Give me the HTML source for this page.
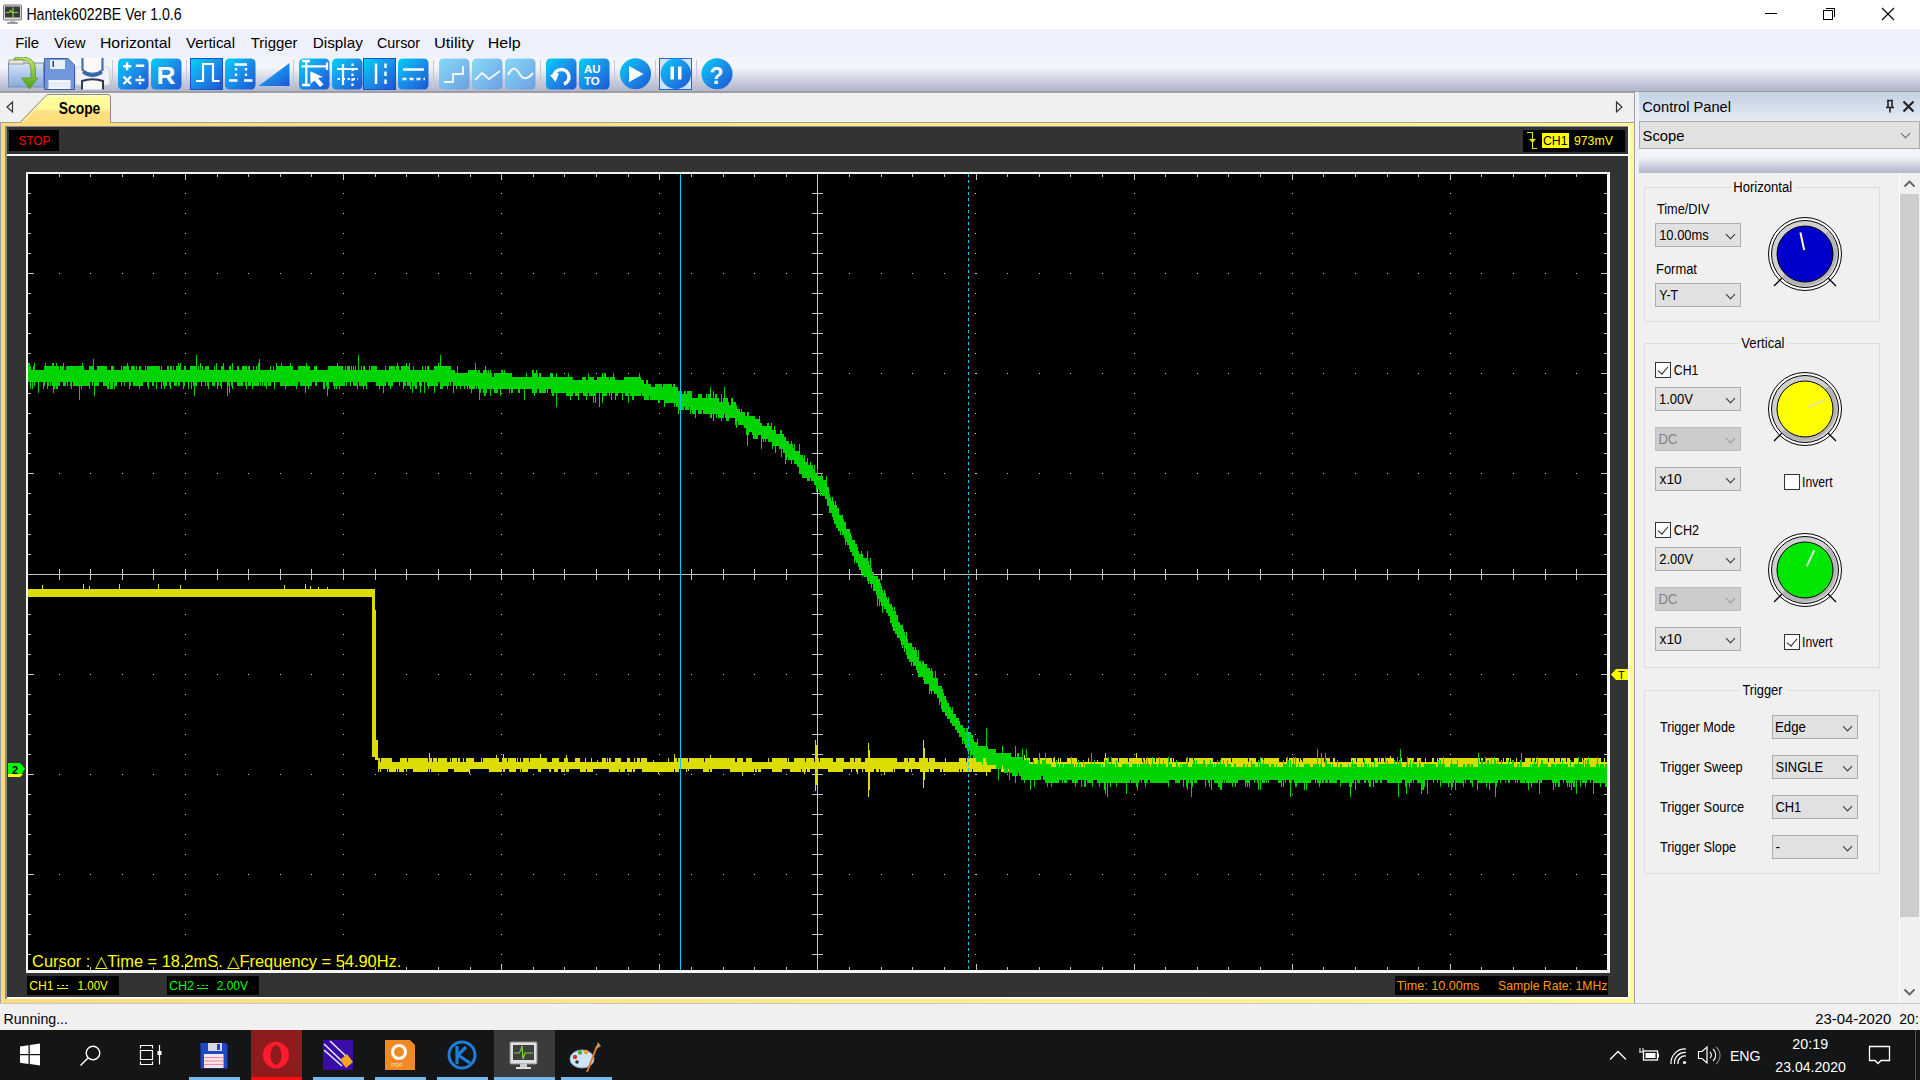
<!DOCTYPE html>
<html><head><meta charset="utf-8">
<style>
*{margin:0;padding:0;box-sizing:border-box}
html,body{width:1920px;height:1080px;overflow:hidden;background:#f0f0f0;font-family:"Liberation Sans",sans-serif;color:#000}
.a{position:absolute}
.t{position:absolute;white-space:nowrap;line-height:1}
#title{left:0;top:0;width:1920px;height:29px;background:#fff}
#menu{left:0;top:29px;width:1920px;height:28px;background:#eef0fb}
#tool{left:0;top:57px;width:1920px;height:35px;background:linear-gradient(#f3f5fb 0%,#f2f5fb 30%,#dcdfea 55%,#c6c9da 75%,#b4b8cc 97%);border-bottom:1px solid #9c9ca4}
#tabs{left:0;top:92px;width:1635px;height:31px;background:#f0f0f0;border-top:1px solid #a0a0a0}
#frame{left:0;top:122px;width:1635px;height:882px;background:linear-gradient(to right,#fedb7a 0%,#fee983 50%,#fff08a 75%,#fffa98 100%);border:1px solid #a0a0a8}
#dark{left:5px;top:126px;width:1625px;height:873px;background:#333;border-left:2px solid #8c8c94;border-top:1px solid #8c8c94}
.blk{position:absolute;background:#000}
.cp{left:1635px;top:92px;width:285px;height:911px;background:#f0f0f0}
.dd{position:absolute;background:#e1e1e1;border:1px solid #adadad;font-size:14px}
.dd span{position:absolute;left:3px;top:5px}
.dd i{position:absolute;right:6px;top:7px;width:7px;height:7px;border-right:1px solid #333;border-bottom:1px solid #333;transform:rotate(45deg)}
.dis{background:#cccccc;border-color:#bfbfbf;color:#838383}
.dis i{border-color:#9a9a9a}
.grp{position:absolute;border:1px solid #dcdcdc}
.grp b{position:absolute;background:#f0f0f0;top:-2px;height:3px}
.cb{position:absolute;width:16px;height:16px;border:1px solid #333;background:#fff}
.cb.on::after{content:"";position:absolute;left:4px;top:1px;width:5px;height:9px;border-right:1.5px solid #222;border-bottom:1.5px solid #222;transform:rotate(40deg)}
.lbl{position:absolute;font-size:14px;white-space:nowrap;line-height:1}
#status{left:0;top:1003px;width:1920px;height:27px;background:#f0f0f0;border-top:1px solid #c8c8c8}
#task{left:0;top:1030px;width:1920px;height:50px;background:#131517}
.ul{position:absolute;top:1077px;height:3px;background:#76b9ed}
</style></head><body>
<!-- title bar -->
<div id="title" class="a"></div>
<svg class="a" style="left:3px;top:4px" width="19" height="21" viewBox="0 0 19 21">
<rect x="0.5" y="1" width="18" height="15" rx="1" fill="#d8d8d8" stroke="#777" stroke-width="1"/>
<rect x="2" y="2.5" width="15" height="11" fill="#3a3a3a"/>
<path d="M3 8.5h3l1.5-2 1.5 2h1l0-5 0 10 0-5h5" stroke="#8fd43a" stroke-width="1.2" fill="none"/>
<rect x="7" y="16" width="5" height="2" fill="#bbb"/><rect x="4" y="18" width="11" height="2" rx="1" fill="#999"/>
</svg>
<div class="a" style="left:1765px;top:13px;width:12px;height:1px;background:#000"></div>
<div class="a" style="left:1823px;top:10px;width:10px;height:10px;border:1px solid #000"></div>
<div class="a" style="left:1826px;top:8px;width:9px;height:9px;border-top:1px solid #000;border-right:1px solid #000"></div>
<svg class="a" style="left:1881px;top:7px" width="14" height="14"><path d="M1 1L13 13M13 1L1 13" stroke="#000" stroke-width="1.1"/></svg>

<!-- menu -->
<div id="menu" class="a"></div>

<!-- toolbar -->
<div id="tool" class="a"></div>
<svg class="a" style="left:0;top:57px" width="740" height="35" viewBox="0 57 740 35">
<defs>
<linearGradient id="bg" x1="0" y1="0" x2="1" y2="1"><stop offset="0" stop-color="#00d2f5"/><stop offset="0.45" stop-color="#1a94ea"/><stop offset="1" stop-color="#1b55d5"/></linearGradient>
<linearGradient id="lb" x1="0" y1="0" x2="1" y2="1"><stop offset="0" stop-color="#86dcf8"/><stop offset="1" stop-color="#6c9ee2"/></linearGradient>
<linearGradient id="fold" x1="0" y1="0" x2="0" y2="1"><stop offset="0" stop-color="#d6e4f6"/><stop offset="1" stop-color="#86a8dc"/></linearGradient>
<linearGradient id="grn" x1="0" y1="0" x2="0" y2="1"><stop offset="0" stop-color="#c8e86a"/><stop offset="1" stop-color="#4aa018"/></linearGradient>
</defs>
<rect x="8.5" y="63" width="35" height="24" fill="url(#fold)" stroke="#7d8db0" stroke-width="1"/>
<rect x="9" y="60" width="15" height="4" fill="#e8e4d0" stroke="#8a8a80" stroke-width="0.8"/>
<path d="M14 59.5Q31 57 31 70V78H21.5L29.5 89L38 78H35.5V70Q35.5 54 14 58Z" fill="url(#grn)" stroke="#5a9a20" stroke-width="0.8"/>
<path d="M44.5 58.5H68L74.5 65V89.5H44.5Z" fill="#6f97da" stroke="#3d5da8" stroke-width="1"/>
<rect x="50" y="60" width="15" height="9" fill="#e8eef8"/><rect x="52.5" y="61" width="1.5" height="6" fill="#33415e"/>
<rect x="48.5" y="80" width="22" height="9" fill="#f0f4fc"/><path d="M49 83.5H70M49 86H70" stroke="#d4dcea" stroke-width="0.8"/>
<rect x="75.5" y="67" width="34" height="18" rx="2.5" fill="#f2f2f6" stroke="#d4d4dc"/>
<rect x="82" y="58" width="21" height="14" fill="#fafafa"/><path d="M82.5 58V70Q92.5 78 102.5 70V58" stroke="#4470b4" stroke-width="2.2" fill="none"/><path d="M83 72Q92.5 79 102 72" stroke="#3a64a8" stroke-width="3" fill="none"/>
<path d="M82 89.5V81Q92.5 77.5 103 81V89.5" stroke="#2a3a58" stroke-width="2" fill="#fbf8f8"/>
<rect x="112" y="60" width="1" height="29" fill="#c4c6d4"/>
<rect x="118" y="58.5" width="30.5" height="31" rx="4.5" fill="url(#bg)"/>
<path d="M123 66.3h8.3M127.1 62.3v8M135.8 65.8h8.5M123.5 76.5l7.5 7.5M131 76.5l-7.5 7.5M135.5 80h9" stroke="#fff" stroke-width="2.4"/><circle cx="140" cy="76.8" r="1.3" fill="#fff"/><circle cx="140" cy="83.2" r="1.3" fill="#fff"/>
<rect x="151" y="58.5" width="30.5" height="31" rx="4.5" fill="url(#bg)"/>
<text x="156.5" y="84" font-family="Liberation Sans" font-weight="bold" font-size="23.5" fill="#fff" textLength="19" lengthAdjust="spacingAndGlyphs">R</text>
<rect x="186" y="60" width="1" height="29" fill="#c4c6d4"/>
<rect x="190.5" y="58.5" width="32" height="31" fill="none" stroke="#1c50d0" stroke-width="1"/>
<rect x="191" y="59" width="31" height="30" fill="url(#bg)"/>
<path d="M196 81H203V64H213V81H219.5" stroke="#fff" stroke-width="2.2" fill="none"/>
<rect x="225" y="58.5" width="30.5" height="31" rx="4.5" fill="url(#bg)"/>
<path d="M229 80.5H237.5M244 80.5H252.5M234.5 64.5H247M236 68v2.5M236 73.5v2.5M246 68v2.5M246 73.5v2.5" stroke="#fff" stroke-width="2.3" fill="none"/>
<path d="M258.5 86L289.5 63V86Z" fill="url(#bg)"/>
<rect x="293" y="60" width="1" height="29" fill="#c4c6d4"/>
<rect x="299" y="58.5" width="30.5" height="31" rx="4.5" fill="url(#bg)"/>
<path d="M302 61H310M302 85H310M306.3 61V85M301.5 66.4H327M327 62.5V70" stroke="#fff" stroke-width="2.3"/><path d="M310.3 71.3L310.5 84L314.5 80.5L320 87L323.5 84.5L318 78L323 77Z" fill="#fff"/>
<rect x="332" y="58.5" width="30.5" height="31" rx="4.5" fill="url(#bg)"/>
<path d="M337 69H358M343 64V85" stroke="#fff" stroke-width="2.2"/><path d="M337.5 79H358M352.5 63.5V86" stroke="#fff" stroke-width="2.2" stroke-dasharray="2.5 2.5"/>
<rect x="363.5" y="58.5" width="32" height="31" fill="none" stroke="#1c50d0" stroke-width="1"/>
<rect x="364" y="59" width="31" height="30" fill="url(#bg)"/>
<path d="M376 63.5V84" stroke="#fff" stroke-width="2.5"/><path d="M385.5 63.5V84" stroke="#fff" stroke-width="2.5" stroke-dasharray="4.5 3.5"/>
<rect x="398" y="58.5" width="30.5" height="31" rx="4.5" fill="url(#bg)"/>
<path d="M403 69.5H424" stroke="#fff" stroke-width="2.5"/><path d="M402.5 79H425" stroke="#fff" stroke-width="2.5" stroke-dasharray="4 3"/>
<rect x="433" y="60" width="1" height="29" fill="#c4c6d4"/>
<rect x="439" y="58.5" width="30.5" height="31" rx="4.5" fill="url(#lb)"/>
<path d="M444 82H453V74H463V66" stroke="#f2f6fc" stroke-width="2" fill="none"/>
<rect x="472" y="58.5" width="30.5" height="31" rx="4.5" fill="url(#lb)"/>
<path d="M475 80L482 73L489 79L500 71" stroke="#f2f6fc" stroke-width="2" fill="none"/>
<rect x="505" y="58.5" width="30.5" height="31" rx="4.5" fill="url(#lb)"/>
<path d="M508 75Q513 64 518.5 72Q524 84 533 73" stroke="#f2f6fc" stroke-width="2" fill="none"/>
<rect x="540" y="60" width="1" height="29" fill="#c4c6d4"/>
<rect x="546" y="58.5" width="30.5" height="31" rx="4.5" fill="url(#bg)"/>
<path d="M554 76A7.5 7.5 0 1 1 564 84" stroke="#fff" stroke-width="3.5" fill="none"/><path d="M550 75L559 73L555.5 82Z" fill="#fff"/>
<rect x="579" y="58.5" width="30.5" height="31" rx="4.5" fill="url(#bg)"/>
<text x="584" y="72.5" font-family="Liberation Sans" font-weight="bold" font-size="11.5" fill="#fff">AU</text><text x="584" y="85" font-family="Liberation Sans" font-weight="bold" font-size="11.5" fill="#fff">TO</text>
<rect x="614" y="60" width="1" height="29" fill="#c4c6d4"/>
<circle cx="635.5" cy="73.8" r="15.5" fill="url(#bg)"/><path d="M629 66V82L643.5 74Z" fill="#fff"/>
<rect x="655" y="60" width="1" height="29" fill="#c4c6d4"/>
<rect x="659.5" y="58.5" width="32" height="31" fill="#cfe3f8" stroke="#1c62dc" stroke-width="1"/>
<circle cx="675.8" cy="73.8" r="15.2" fill="url(#bg)"/><rect x="670.5" y="66.5" width="3.5" height="13" fill="#fff"/><rect x="678" y="66.5" width="3.5" height="13" fill="#fff"/>
<rect x="696" y="60" width="1" height="29" fill="#c4c6d4"/>
<circle cx="717" cy="73.8" r="15.5" fill="url(#bg)"/><text x="709.5" y="83.7" font-family="Liberation Sans" font-weight="bold" font-size="23" fill="#fff" textLength="14" lengthAdjust="spacingAndGlyphs">?</text>
</svg>

<!-- tab strip -->
<div id="tabs" class="a"></div>
<svg class="a" style="left:0;top:92px" width="1635" height="31">
<path d="M20 30.5L47 2.5H108Q110.5 2.5 110.5 5V30.5" fill="url(#tg)" stroke="#8a8a8a" stroke-width="1"/>
<defs><linearGradient id="tg" x1="0" y1="0" x2="0" y2="1"><stop offset="0" stop-color="#ffff9c"/><stop offset="0.5" stop-color="#fffb96"/><stop offset="0.62" stop-color="#fee082"/><stop offset="1" stop-color="#fedb7a"/></linearGradient></defs>
<path d="M23 30L48.5 4H108" stroke="#fff" stroke-width="1" fill="none" opacity="0.8"/>
<path d="M12.5 10L7 15L12.5 20Z" fill="none" stroke="#333" stroke-width="1.2"/>
<path d="M1616.5 10L1622 15L1616.5 20Z" fill="none" stroke="#333" stroke-width="1.2"/>
</svg>

<!-- scope frame -->
<div id="frame" class="a"></div>


<div class="a" style="left:21px;top:122px;width:89px;height:1px;background:#fedb7a"></div>
<div id="dark" class="a"></div>
<div class="a" style="left:7px;top:154px;width:1621px;height:2px;background:#fafafa"></div>
<div class="a" style="left:7px;top:997px;width:1623px;height:2px;background:#fafafa"></div>
<div class="a" style="left:1628px;top:126px;width:2px;height:873px;background:#fafafa"></div>
<!-- STOP box -->
<div class="blk" style="left:9px;top:130px;width:50px;height:21px"></div>
<!-- trigger box -->
<div class="blk" style="left:1523px;top:130px;width:102px;height:22px"></div>
<svg class="a" style="left:1525px;top:130px" width="14" height="20" viewBox="1525 130 14 20" shape-rendering="crispEdges"><path d="M1527 132h6v1h-6zM1532 132h1v17h-1zM1532 148h5v1h-5z" fill="#e8e800"/><path d="M1529 139h7l-3.5 4z" fill="#e8e800" shape-rendering="auto"/></svg>
<div class="a" style="left:1542px;top:133px;width:27px;height:15px;background:#ff0"></div>
<!-- plot -->
<div class="blk" style="left:26px;top:172px;width:1584px;height:801px;border:2px solid #f4f4f4;border-bottom-width:3px;border-right-width:3px"></div>
<svg style="position:absolute;left:0;top:0" width="1635" height="1003" viewBox="0 0 1635 1003" shape-rendering="crispEdges">
<path fill="#c4c4c4" d="M817 174h1v797h-1zM28 574h1579v1h-1579zM59 569h1v11h-1zM59 174h1v3h-1zM59 967h1v3h-1zM90 569h1v11h-1zM90 174h1v3h-1zM90 967h1v3h-1zM122 569h1v11h-1zM122 174h1v3h-1zM122 967h1v3h-1zM153 569h1v11h-1zM153 174h1v3h-1zM153 967h1v3h-1zM185 569h1v11h-1zM185 174h1v6h-1zM185 964h1v6h-1zM217 569h1v11h-1zM217 174h1v3h-1zM217 967h1v3h-1zM248 569h1v11h-1zM248 174h1v3h-1zM248 967h1v3h-1zM280 569h1v11h-1zM280 174h1v3h-1zM280 967h1v3h-1zM311 569h1v11h-1zM311 174h1v3h-1zM311 967h1v3h-1zM343 569h1v11h-1zM343 174h1v6h-1zM343 964h1v6h-1zM375 569h1v11h-1zM375 174h1v3h-1zM375 967h1v3h-1zM406 569h1v11h-1zM406 174h1v3h-1zM406 967h1v3h-1zM438 569h1v11h-1zM438 174h1v3h-1zM438 967h1v3h-1zM470 569h1v11h-1zM470 174h1v3h-1zM470 967h1v3h-1zM501 569h1v11h-1zM501 174h1v6h-1zM501 964h1v6h-1zM533 569h1v11h-1zM533 174h1v3h-1zM533 967h1v3h-1zM564 569h1v11h-1zM564 174h1v3h-1zM564 967h1v3h-1zM596 569h1v11h-1zM596 174h1v3h-1zM596 967h1v3h-1zM628 569h1v11h-1zM628 174h1v3h-1zM628 967h1v3h-1zM659 569h1v11h-1zM659 174h1v6h-1zM659 964h1v6h-1zM691 569h1v11h-1zM691 174h1v3h-1zM691 967h1v3h-1zM723 569h1v11h-1zM723 174h1v3h-1zM723 967h1v3h-1zM754 569h1v11h-1zM754 174h1v3h-1zM754 967h1v3h-1zM786 569h1v11h-1zM786 174h1v3h-1zM786 967h1v3h-1zM817 569h1v11h-1zM817 174h1v6h-1zM817 964h1v6h-1zM849 569h1v11h-1zM849 174h1v3h-1zM849 967h1v3h-1zM881 569h1v11h-1zM881 174h1v3h-1zM881 967h1v3h-1zM912 569h1v11h-1zM912 174h1v3h-1zM912 967h1v3h-1zM944 569h1v11h-1zM944 174h1v3h-1zM944 967h1v3h-1zM976 569h1v11h-1zM976 174h1v6h-1zM976 964h1v6h-1zM1007 569h1v11h-1zM1007 174h1v3h-1zM1007 967h1v3h-1zM1039 569h1v11h-1zM1039 174h1v3h-1zM1039 967h1v3h-1zM1070 569h1v11h-1zM1070 174h1v3h-1zM1070 967h1v3h-1zM1102 569h1v11h-1zM1102 174h1v3h-1zM1102 967h1v3h-1zM1134 569h1v11h-1zM1134 174h1v6h-1zM1134 964h1v6h-1zM1165 569h1v11h-1zM1165 174h1v3h-1zM1165 967h1v3h-1zM1197 569h1v11h-1zM1197 174h1v3h-1zM1197 967h1v3h-1zM1228 569h1v11h-1zM1228 174h1v3h-1zM1228 967h1v3h-1zM1260 569h1v11h-1zM1260 174h1v3h-1zM1260 967h1v3h-1zM1292 569h1v11h-1zM1292 174h1v6h-1zM1292 964h1v6h-1zM1323 569h1v11h-1zM1323 174h1v3h-1zM1323 967h1v3h-1zM1355 569h1v11h-1zM1355 174h1v3h-1zM1355 967h1v3h-1zM1387 569h1v11h-1zM1387 174h1v3h-1zM1387 967h1v3h-1zM1418 569h1v11h-1zM1418 174h1v3h-1zM1418 967h1v3h-1zM1450 569h1v11h-1zM1450 174h1v6h-1zM1450 964h1v6h-1zM1481 569h1v11h-1zM1481 174h1v3h-1zM1481 967h1v3h-1zM1513 569h1v11h-1zM1513 174h1v3h-1zM1513 967h1v3h-1zM1545 569h1v11h-1zM1545 174h1v3h-1zM1545 967h1v3h-1zM1576 569h1v11h-1zM1576 174h1v3h-1zM1576 967h1v3h-1zM812 193h11v1h-11zM28 193h3v1h-3zM1604 193h3v1h-3zM812 213h11v1h-11zM28 213h3v1h-3zM1604 213h3v1h-3zM812 233h11v1h-11zM28 233h3v1h-3zM1604 233h3v1h-3zM812 253h11v1h-11zM28 253h3v1h-3zM1604 253h3v1h-3zM812 273h11v1h-11zM28 273h6v1h-6zM1601 273h6v1h-6zM812 293h11v1h-11zM28 293h3v1h-3zM1604 293h3v1h-3zM812 313h11v1h-11zM28 313h3v1h-3zM1604 313h3v1h-3zM812 333h11v1h-11zM28 333h3v1h-3zM1604 333h3v1h-3zM812 353h11v1h-11zM28 353h3v1h-3zM1604 353h3v1h-3zM812 373h11v1h-11zM28 373h6v1h-6zM1601 373h6v1h-6zM812 393h11v1h-11zM28 393h3v1h-3zM1604 393h3v1h-3zM812 413h11v1h-11zM28 413h3v1h-3zM1604 413h3v1h-3zM812 433h11v1h-11zM28 433h3v1h-3zM1604 433h3v1h-3zM812 453h11v1h-11zM28 453h3v1h-3zM1604 453h3v1h-3zM812 473h11v1h-11zM28 473h6v1h-6zM1601 473h6v1h-6zM812 493h11v1h-11zM28 493h3v1h-3zM1604 493h3v1h-3zM812 514h11v1h-11zM28 514h3v1h-3zM1604 514h3v1h-3zM812 534h11v1h-11zM28 534h3v1h-3zM1604 534h3v1h-3zM812 554h11v1h-11zM28 554h3v1h-3zM1604 554h3v1h-3zM812 574h11v1h-11zM28 574h6v1h-6zM1601 574h6v1h-6zM812 594h11v1h-11zM28 594h3v1h-3zM1604 594h3v1h-3zM812 614h11v1h-11zM28 614h3v1h-3zM1604 614h3v1h-3zM812 634h11v1h-11zM28 634h3v1h-3zM1604 634h3v1h-3zM812 654h11v1h-11zM28 654h3v1h-3zM1604 654h3v1h-3zM812 674h11v1h-11zM28 674h6v1h-6zM1601 674h6v1h-6zM812 694h11v1h-11zM28 694h3v1h-3zM1604 694h3v1h-3zM812 714h11v1h-11zM28 714h3v1h-3zM1604 714h3v1h-3zM812 734h11v1h-11zM28 734h3v1h-3zM1604 734h3v1h-3zM812 754h11v1h-11zM28 754h3v1h-3zM1604 754h3v1h-3zM812 774h11v1h-11zM28 774h6v1h-6zM1601 774h6v1h-6zM812 794h11v1h-11zM28 794h3v1h-3zM1604 794h3v1h-3zM812 814h11v1h-11zM28 814h3v1h-3zM1604 814h3v1h-3zM812 834h11v1h-11zM28 834h3v1h-3zM1604 834h3v1h-3zM812 854h11v1h-11zM28 854h3v1h-3zM1604 854h3v1h-3zM812 874h11v1h-11zM28 874h6v1h-6zM1601 874h6v1h-6zM812 894h11v1h-11zM28 894h3v1h-3zM1604 894h3v1h-3zM812 914h11v1h-11zM28 914h3v1h-3zM1604 914h3v1h-3zM812 934h11v1h-11zM28 934h3v1h-3zM1604 934h3v1h-3zM812 954h11v1h-11zM28 954h3v1h-3zM1604 954h3v1h-3zM185 193h1v1h-1zM185 213h1v1h-1zM185 233h1v1h-1zM185 253h1v1h-1zM185 273h1v1h-1zM185 293h1v1h-1zM185 313h1v1h-1zM185 333h1v1h-1zM185 353h1v1h-1zM185 373h1v1h-1zM185 393h1v1h-1zM185 413h1v1h-1zM185 433h1v1h-1zM185 453h1v1h-1zM185 473h1v1h-1zM185 493h1v1h-1zM185 514h1v1h-1zM185 534h1v1h-1zM185 554h1v1h-1zM185 574h1v1h-1zM185 594h1v1h-1zM185 614h1v1h-1zM185 634h1v1h-1zM185 654h1v1h-1zM185 674h1v1h-1zM185 694h1v1h-1zM185 714h1v1h-1zM185 734h1v1h-1zM185 754h1v1h-1zM185 774h1v1h-1zM185 794h1v1h-1zM185 814h1v1h-1zM185 834h1v1h-1zM185 854h1v1h-1zM185 874h1v1h-1zM185 894h1v1h-1zM185 914h1v1h-1zM185 934h1v1h-1zM185 954h1v1h-1zM343 193h1v1h-1zM343 213h1v1h-1zM343 233h1v1h-1zM343 253h1v1h-1zM343 273h1v1h-1zM343 293h1v1h-1zM343 313h1v1h-1zM343 333h1v1h-1zM343 353h1v1h-1zM343 373h1v1h-1zM343 393h1v1h-1zM343 413h1v1h-1zM343 433h1v1h-1zM343 453h1v1h-1zM343 473h1v1h-1zM343 493h1v1h-1zM343 514h1v1h-1zM343 534h1v1h-1zM343 554h1v1h-1zM343 574h1v1h-1zM343 594h1v1h-1zM343 614h1v1h-1zM343 634h1v1h-1zM343 654h1v1h-1zM343 674h1v1h-1zM343 694h1v1h-1zM343 714h1v1h-1zM343 734h1v1h-1zM343 754h1v1h-1zM343 774h1v1h-1zM343 794h1v1h-1zM343 814h1v1h-1zM343 834h1v1h-1zM343 854h1v1h-1zM343 874h1v1h-1zM343 894h1v1h-1zM343 914h1v1h-1zM343 934h1v1h-1zM343 954h1v1h-1zM501 193h1v1h-1zM501 213h1v1h-1zM501 233h1v1h-1zM501 253h1v1h-1zM501 273h1v1h-1zM501 293h1v1h-1zM501 313h1v1h-1zM501 333h1v1h-1zM501 353h1v1h-1zM501 373h1v1h-1zM501 393h1v1h-1zM501 413h1v1h-1zM501 433h1v1h-1zM501 453h1v1h-1zM501 473h1v1h-1zM501 493h1v1h-1zM501 514h1v1h-1zM501 534h1v1h-1zM501 554h1v1h-1zM501 574h1v1h-1zM501 594h1v1h-1zM501 614h1v1h-1zM501 634h1v1h-1zM501 654h1v1h-1zM501 674h1v1h-1zM501 694h1v1h-1zM501 714h1v1h-1zM501 734h1v1h-1zM501 754h1v1h-1zM501 774h1v1h-1zM501 794h1v1h-1zM501 814h1v1h-1zM501 834h1v1h-1zM501 854h1v1h-1zM501 874h1v1h-1zM501 894h1v1h-1zM501 914h1v1h-1zM501 934h1v1h-1zM501 954h1v1h-1zM659 193h1v1h-1zM659 213h1v1h-1zM659 233h1v1h-1zM659 253h1v1h-1zM659 273h1v1h-1zM659 293h1v1h-1zM659 313h1v1h-1zM659 333h1v1h-1zM659 353h1v1h-1zM659 373h1v1h-1zM659 393h1v1h-1zM659 413h1v1h-1zM659 433h1v1h-1zM659 453h1v1h-1zM659 473h1v1h-1zM659 493h1v1h-1zM659 514h1v1h-1zM659 534h1v1h-1zM659 554h1v1h-1zM659 574h1v1h-1zM659 594h1v1h-1zM659 614h1v1h-1zM659 634h1v1h-1zM659 654h1v1h-1zM659 674h1v1h-1zM659 694h1v1h-1zM659 714h1v1h-1zM659 734h1v1h-1zM659 754h1v1h-1zM659 774h1v1h-1zM659 794h1v1h-1zM659 814h1v1h-1zM659 834h1v1h-1zM659 854h1v1h-1zM659 874h1v1h-1zM659 894h1v1h-1zM659 914h1v1h-1zM659 934h1v1h-1zM659 954h1v1h-1zM975 193h1v1h-1zM975 213h1v1h-1zM975 233h1v1h-1zM975 253h1v1h-1zM975 273h1v1h-1zM975 293h1v1h-1zM975 313h1v1h-1zM975 333h1v1h-1zM975 353h1v1h-1zM975 373h1v1h-1zM975 393h1v1h-1zM975 413h1v1h-1zM975 433h1v1h-1zM975 453h1v1h-1zM975 473h1v1h-1zM975 493h1v1h-1zM975 514h1v1h-1zM975 534h1v1h-1zM975 554h1v1h-1zM975 574h1v1h-1zM975 594h1v1h-1zM975 614h1v1h-1zM975 634h1v1h-1zM975 654h1v1h-1zM975 674h1v1h-1zM975 694h1v1h-1zM975 714h1v1h-1zM975 734h1v1h-1zM975 754h1v1h-1zM975 774h1v1h-1zM975 794h1v1h-1zM975 814h1v1h-1zM975 834h1v1h-1zM975 854h1v1h-1zM975 874h1v1h-1zM975 894h1v1h-1zM975 914h1v1h-1zM975 934h1v1h-1zM975 954h1v1h-1zM1134 193h1v1h-1zM1134 213h1v1h-1zM1134 233h1v1h-1zM1134 253h1v1h-1zM1134 273h1v1h-1zM1134 293h1v1h-1zM1134 313h1v1h-1zM1134 333h1v1h-1zM1134 353h1v1h-1zM1134 373h1v1h-1zM1134 393h1v1h-1zM1134 413h1v1h-1zM1134 433h1v1h-1zM1134 453h1v1h-1zM1134 473h1v1h-1zM1134 493h1v1h-1zM1134 514h1v1h-1zM1134 534h1v1h-1zM1134 554h1v1h-1zM1134 574h1v1h-1zM1134 594h1v1h-1zM1134 614h1v1h-1zM1134 634h1v1h-1zM1134 654h1v1h-1zM1134 674h1v1h-1zM1134 694h1v1h-1zM1134 714h1v1h-1zM1134 734h1v1h-1zM1134 754h1v1h-1zM1134 774h1v1h-1zM1134 794h1v1h-1zM1134 814h1v1h-1zM1134 834h1v1h-1zM1134 854h1v1h-1zM1134 874h1v1h-1zM1134 894h1v1h-1zM1134 914h1v1h-1zM1134 934h1v1h-1zM1134 954h1v1h-1zM1292 193h1v1h-1zM1292 213h1v1h-1zM1292 233h1v1h-1zM1292 253h1v1h-1zM1292 273h1v1h-1zM1292 293h1v1h-1zM1292 313h1v1h-1zM1292 333h1v1h-1zM1292 353h1v1h-1zM1292 373h1v1h-1zM1292 393h1v1h-1zM1292 413h1v1h-1zM1292 433h1v1h-1zM1292 453h1v1h-1zM1292 473h1v1h-1zM1292 493h1v1h-1zM1292 514h1v1h-1zM1292 534h1v1h-1zM1292 554h1v1h-1zM1292 574h1v1h-1zM1292 594h1v1h-1zM1292 614h1v1h-1zM1292 634h1v1h-1zM1292 654h1v1h-1zM1292 674h1v1h-1zM1292 694h1v1h-1zM1292 714h1v1h-1zM1292 734h1v1h-1zM1292 754h1v1h-1zM1292 774h1v1h-1zM1292 794h1v1h-1zM1292 814h1v1h-1zM1292 834h1v1h-1zM1292 854h1v1h-1zM1292 874h1v1h-1zM1292 894h1v1h-1zM1292 914h1v1h-1zM1292 934h1v1h-1zM1292 954h1v1h-1zM1450 193h1v1h-1zM1450 213h1v1h-1zM1450 233h1v1h-1zM1450 253h1v1h-1zM1450 273h1v1h-1zM1450 293h1v1h-1zM1450 313h1v1h-1zM1450 333h1v1h-1zM1450 353h1v1h-1zM1450 373h1v1h-1zM1450 393h1v1h-1zM1450 413h1v1h-1zM1450 433h1v1h-1zM1450 453h1v1h-1zM1450 473h1v1h-1zM1450 493h1v1h-1zM1450 514h1v1h-1zM1450 534h1v1h-1zM1450 554h1v1h-1zM1450 574h1v1h-1zM1450 594h1v1h-1zM1450 614h1v1h-1zM1450 634h1v1h-1zM1450 654h1v1h-1zM1450 674h1v1h-1zM1450 694h1v1h-1zM1450 714h1v1h-1zM1450 734h1v1h-1zM1450 754h1v1h-1zM1450 774h1v1h-1zM1450 794h1v1h-1zM1450 814h1v1h-1zM1450 834h1v1h-1zM1450 854h1v1h-1zM1450 874h1v1h-1zM1450 894h1v1h-1zM1450 914h1v1h-1zM1450 934h1v1h-1zM1450 954h1v1h-1zM59 273h1v1h-1zM90 273h1v1h-1zM122 273h1v1h-1zM153 273h1v1h-1zM185 273h1v1h-1zM217 273h1v1h-1zM248 273h1v1h-1zM280 273h1v1h-1zM311 273h1v1h-1zM343 273h1v1h-1zM375 273h1v1h-1zM406 273h1v1h-1zM438 273h1v1h-1zM470 273h1v1h-1zM501 273h1v1h-1zM533 273h1v1h-1zM564 273h1v1h-1zM596 273h1v1h-1zM628 273h1v1h-1zM659 273h1v1h-1zM691 273h1v1h-1zM723 273h1v1h-1zM754 273h1v1h-1zM786 273h1v1h-1zM817 273h1v1h-1zM849 273h1v1h-1zM881 273h1v1h-1zM912 273h1v1h-1zM944 273h1v1h-1zM976 273h1v1h-1zM1007 273h1v1h-1zM1039 273h1v1h-1zM1070 273h1v1h-1zM1102 273h1v1h-1zM1134 273h1v1h-1zM1165 273h1v1h-1zM1197 273h1v1h-1zM1228 273h1v1h-1zM1260 273h1v1h-1zM1292 273h1v1h-1zM1323 273h1v1h-1zM1355 273h1v1h-1zM1387 273h1v1h-1zM1418 273h1v1h-1zM1450 273h1v1h-1zM1481 273h1v1h-1zM1513 273h1v1h-1zM1545 273h1v1h-1zM1576 273h1v1h-1zM59 373h1v1h-1zM90 373h1v1h-1zM122 373h1v1h-1zM153 373h1v1h-1zM185 373h1v1h-1zM217 373h1v1h-1zM248 373h1v1h-1zM280 373h1v1h-1zM311 373h1v1h-1zM343 373h1v1h-1zM375 373h1v1h-1zM406 373h1v1h-1zM438 373h1v1h-1zM470 373h1v1h-1zM501 373h1v1h-1zM533 373h1v1h-1zM564 373h1v1h-1zM596 373h1v1h-1zM628 373h1v1h-1zM659 373h1v1h-1zM691 373h1v1h-1zM723 373h1v1h-1zM754 373h1v1h-1zM786 373h1v1h-1zM817 373h1v1h-1zM849 373h1v1h-1zM881 373h1v1h-1zM912 373h1v1h-1zM944 373h1v1h-1zM976 373h1v1h-1zM1007 373h1v1h-1zM1039 373h1v1h-1zM1070 373h1v1h-1zM1102 373h1v1h-1zM1134 373h1v1h-1zM1165 373h1v1h-1zM1197 373h1v1h-1zM1228 373h1v1h-1zM1260 373h1v1h-1zM1292 373h1v1h-1zM1323 373h1v1h-1zM1355 373h1v1h-1zM1387 373h1v1h-1zM1418 373h1v1h-1zM1450 373h1v1h-1zM1481 373h1v1h-1zM1513 373h1v1h-1zM1545 373h1v1h-1zM1576 373h1v1h-1zM59 473h1v1h-1zM90 473h1v1h-1zM122 473h1v1h-1zM153 473h1v1h-1zM185 473h1v1h-1zM217 473h1v1h-1zM248 473h1v1h-1zM280 473h1v1h-1zM311 473h1v1h-1zM343 473h1v1h-1zM375 473h1v1h-1zM406 473h1v1h-1zM438 473h1v1h-1zM470 473h1v1h-1zM501 473h1v1h-1zM533 473h1v1h-1zM564 473h1v1h-1zM596 473h1v1h-1zM628 473h1v1h-1zM659 473h1v1h-1zM691 473h1v1h-1zM723 473h1v1h-1zM754 473h1v1h-1zM786 473h1v1h-1zM817 473h1v1h-1zM849 473h1v1h-1zM881 473h1v1h-1zM912 473h1v1h-1zM944 473h1v1h-1zM976 473h1v1h-1zM1007 473h1v1h-1zM1039 473h1v1h-1zM1070 473h1v1h-1zM1102 473h1v1h-1zM1134 473h1v1h-1zM1165 473h1v1h-1zM1197 473h1v1h-1zM1228 473h1v1h-1zM1260 473h1v1h-1zM1292 473h1v1h-1zM1323 473h1v1h-1zM1355 473h1v1h-1zM1387 473h1v1h-1zM1418 473h1v1h-1zM1450 473h1v1h-1zM1481 473h1v1h-1zM1513 473h1v1h-1zM1545 473h1v1h-1zM1576 473h1v1h-1zM59 674h1v1h-1zM90 674h1v1h-1zM122 674h1v1h-1zM153 674h1v1h-1zM185 674h1v1h-1zM217 674h1v1h-1zM248 674h1v1h-1zM280 674h1v1h-1zM311 674h1v1h-1zM343 674h1v1h-1zM375 674h1v1h-1zM406 674h1v1h-1zM438 674h1v1h-1zM470 674h1v1h-1zM501 674h1v1h-1zM533 674h1v1h-1zM564 674h1v1h-1zM596 674h1v1h-1zM628 674h1v1h-1zM659 674h1v1h-1zM691 674h1v1h-1zM723 674h1v1h-1zM754 674h1v1h-1zM786 674h1v1h-1zM817 674h1v1h-1zM849 674h1v1h-1zM881 674h1v1h-1zM912 674h1v1h-1zM944 674h1v1h-1zM976 674h1v1h-1zM1007 674h1v1h-1zM1039 674h1v1h-1zM1070 674h1v1h-1zM1102 674h1v1h-1zM1134 674h1v1h-1zM1165 674h1v1h-1zM1197 674h1v1h-1zM1228 674h1v1h-1zM1260 674h1v1h-1zM1292 674h1v1h-1zM1323 674h1v1h-1zM1355 674h1v1h-1zM1387 674h1v1h-1zM1418 674h1v1h-1zM1450 674h1v1h-1zM1481 674h1v1h-1zM1513 674h1v1h-1zM1545 674h1v1h-1zM1576 674h1v1h-1zM59 774h1v1h-1zM90 774h1v1h-1zM122 774h1v1h-1zM153 774h1v1h-1zM185 774h1v1h-1zM217 774h1v1h-1zM248 774h1v1h-1zM280 774h1v1h-1zM311 774h1v1h-1zM343 774h1v1h-1zM375 774h1v1h-1zM406 774h1v1h-1zM438 774h1v1h-1zM470 774h1v1h-1zM501 774h1v1h-1zM533 774h1v1h-1zM564 774h1v1h-1zM596 774h1v1h-1zM628 774h1v1h-1zM659 774h1v1h-1zM691 774h1v1h-1zM723 774h1v1h-1zM754 774h1v1h-1zM786 774h1v1h-1zM817 774h1v1h-1zM849 774h1v1h-1zM881 774h1v1h-1zM912 774h1v1h-1zM944 774h1v1h-1zM976 774h1v1h-1zM1007 774h1v1h-1zM1039 774h1v1h-1zM1070 774h1v1h-1zM1102 774h1v1h-1zM1134 774h1v1h-1zM1165 774h1v1h-1zM1197 774h1v1h-1zM1228 774h1v1h-1zM1260 774h1v1h-1zM1292 774h1v1h-1zM1323 774h1v1h-1zM1355 774h1v1h-1zM1387 774h1v1h-1zM1418 774h1v1h-1zM1450 774h1v1h-1zM1481 774h1v1h-1zM1513 774h1v1h-1zM1545 774h1v1h-1zM1576 774h1v1h-1zM59 874h1v1h-1zM90 874h1v1h-1zM122 874h1v1h-1zM153 874h1v1h-1zM185 874h1v1h-1zM217 874h1v1h-1zM248 874h1v1h-1zM280 874h1v1h-1zM311 874h1v1h-1zM343 874h1v1h-1zM375 874h1v1h-1zM406 874h1v1h-1zM438 874h1v1h-1zM470 874h1v1h-1zM501 874h1v1h-1zM533 874h1v1h-1zM564 874h1v1h-1zM596 874h1v1h-1zM628 874h1v1h-1zM659 874h1v1h-1zM691 874h1v1h-1zM723 874h1v1h-1zM754 874h1v1h-1zM786 874h1v1h-1zM817 874h1v1h-1zM849 874h1v1h-1zM881 874h1v1h-1zM912 874h1v1h-1zM944 874h1v1h-1zM976 874h1v1h-1zM1007 874h1v1h-1zM1039 874h1v1h-1zM1070 874h1v1h-1zM1102 874h1v1h-1zM1134 874h1v1h-1zM1165 874h1v1h-1zM1197 874h1v1h-1zM1228 874h1v1h-1zM1260 874h1v1h-1zM1292 874h1v1h-1zM1323 874h1v1h-1zM1355 874h1v1h-1zM1387 874h1v1h-1zM1418 874h1v1h-1zM1450 874h1v1h-1zM1481 874h1v1h-1zM1513 874h1v1h-1zM1545 874h1v1h-1zM1576 874h1v1h-1z"/>
<path fill="#dcdc00" d="M28 589h345v8h-345zM42 585h1v5h-1zM83 584h1v5h-1zM89 586h1v5h-1zM119 584h1v5h-1zM158 584h1v5h-1zM180 585h1v5h-1zM284 585h1v5h-1zM305 584h1v5h-1zM310 586h1v5h-1zM318 587h1v5h-1zM327 587h1v5h-1zM372 589h3v168h-3zM375 610h1v150h-1zM376 740h2v20h-2zM378 758h1v14h-1zM379 758h1v11h-1zM380 762h1v10h-1zM381 758h1v11h-1zM382 758h1v11h-1zM383 758h1v11h-1zM384 758h1v11h-1zM385 758h1v11h-1zM386 758h1v11h-1zM387 758h1v14h-1zM388 758h1v11h-1zM389 758h1v14h-1zM390 758h1v14h-1zM391 758h1v14h-1zM392 762h1v10h-1zM393 762h1v10h-1zM394 762h1v10h-1zM395 762h1v10h-1zM396 762h1v7h-1zM397 762h1v10h-1zM398 762h1v7h-1zM399 762h1v10h-1zM400 758h1v14h-1zM401 758h1v14h-1zM402 758h1v14h-1zM403 758h1v14h-1zM404 758h1v11h-1zM405 758h1v11h-1zM406 758h1v14h-1zM407 762h1v7h-1zM408 758h1v11h-1zM409 758h1v11h-1zM410 758h1v11h-1zM411 758h1v11h-1zM412 758h1v11h-1zM413 758h1v14h-1zM414 758h1v14h-1zM415 758h1v14h-1zM416 758h1v14h-1zM417 758h1v14h-1zM418 758h1v14h-1zM419 758h1v14h-1zM420 758h1v14h-1zM421 758h1v14h-1zM422 758h1v14h-1zM423 758h1v14h-1zM424 758h1v14h-1zM425 758h1v14h-1zM426 758h1v14h-1zM427 758h1v14h-1zM428 762h1v7h-1zM429 753h1v19h-1zM430 758h1v11h-1zM431 758h1v14h-1zM432 762h1v10h-1zM433 758h1v14h-1zM434 758h1v14h-1zM435 758h1v14h-1zM436 758h1v14h-1zM437 762h1v10h-1zM438 758h1v14h-1zM439 758h1v14h-1zM440 758h1v14h-1zM441 758h1v14h-1zM442 758h1v14h-1zM443 758h1v14h-1zM444 758h1v14h-1zM445 758h1v14h-1zM446 758h1v14h-1zM447 762h1v10h-1zM448 762h1v7h-1zM449 762h1v7h-1zM450 758h1v11h-1zM451 762h1v7h-1zM452 758h1v11h-1zM453 758h1v11h-1zM454 758h1v14h-1zM455 758h1v14h-1zM456 758h1v14h-1zM457 762h1v10h-1zM458 758h1v14h-1zM459 758h1v14h-1zM460 762h1v10h-1zM461 762h1v10h-1zM462 762h1v10h-1zM463 758h1v14h-1zM464 762h1v10h-1zM465 762h1v10h-1zM466 758h1v14h-1zM467 758h1v14h-1zM468 758h1v14h-1zM469 758h1v16h-1zM470 758h1v11h-1zM471 758h1v11h-1zM472 758h1v11h-1zM473 758h1v11h-1zM474 762h1v7h-1zM475 762h1v7h-1zM476 762h1v7h-1zM477 762h1v7h-1zM478 762h1v7h-1zM479 762h1v7h-1zM480 762h1v7h-1zM481 758h1v11h-1zM482 762h1v7h-1zM483 758h1v11h-1zM484 758h1v11h-1zM485 758h1v11h-1zM486 758h1v11h-1zM487 758h1v11h-1zM488 758h1v11h-1zM489 758h1v14h-1zM490 758h1v14h-1zM491 758h1v14h-1zM492 758h1v14h-1zM493 758h1v14h-1zM494 758h1v14h-1zM495 758h1v14h-1zM496 755h1v17h-1zM497 758h1v14h-1zM498 758h1v14h-1zM499 762h1v10h-1zM500 762h1v10h-1zM501 762h1v10h-1zM502 758h1v11h-1zM503 754h1v18h-1zM504 758h1v14h-1zM505 758h1v11h-1zM506 758h1v11h-1zM507 762h1v7h-1zM508 758h1v11h-1zM509 758h1v14h-1zM510 758h1v14h-1zM511 758h1v14h-1zM512 758h1v14h-1zM513 758h1v14h-1zM514 758h1v14h-1zM515 758h1v14h-1zM516 762h1v7h-1zM517 758h1v11h-1zM518 762h1v7h-1zM519 762h1v7h-1zM520 758h1v14h-1zM521 762h1v7h-1zM522 762h1v10h-1zM523 758h1v14h-1zM524 758h1v14h-1zM525 758h1v14h-1zM526 758h1v14h-1zM527 758h1v14h-1zM528 758h1v11h-1zM529 762h1v7h-1zM530 758h1v11h-1zM531 758h1v11h-1zM532 758h1v11h-1zM533 758h1v11h-1zM534 758h1v11h-1zM535 758h1v11h-1zM536 758h1v11h-1zM537 758h1v11h-1zM538 758h1v14h-1zM539 758h1v14h-1zM540 754h1v18h-1zM541 758h1v11h-1zM542 758h1v11h-1zM543 758h1v11h-1zM544 758h1v11h-1zM545 758h1v11h-1zM546 758h1v11h-1zM547 762h1v7h-1zM548 762h1v7h-1zM549 762h1v10h-1zM550 762h1v10h-1zM551 762h1v7h-1zM552 758h1v11h-1zM553 758h1v11h-1zM554 758h1v14h-1zM555 758h1v14h-1zM556 758h1v14h-1zM557 758h1v14h-1zM558 758h1v11h-1zM559 762h1v7h-1zM560 762h1v7h-1zM561 762h1v10h-1zM562 762h1v10h-1zM563 762h1v10h-1zM564 758h1v14h-1zM565 758h1v11h-1zM566 755h1v17h-1zM567 758h1v14h-1zM568 762h1v10h-1zM569 762h1v7h-1zM570 762h1v7h-1zM571 762h1v7h-1zM572 762h1v7h-1zM573 762h1v7h-1zM574 762h1v7h-1zM575 758h1v11h-1zM576 758h1v11h-1zM577 758h1v11h-1zM578 758h1v11h-1zM579 758h1v11h-1zM580 762h1v10h-1zM581 762h1v10h-1zM582 762h1v10h-1zM583 762h1v10h-1zM584 762h1v10h-1zM585 758h1v14h-1zM586 762h1v7h-1zM587 762h1v10h-1zM588 762h1v10h-1zM589 762h1v10h-1zM590 762h1v10h-1zM591 758h1v14h-1zM592 762h1v10h-1zM593 762h1v7h-1zM594 762h1v7h-1zM595 762h1v7h-1zM596 762h1v7h-1zM597 760h1v9h-1zM598 762h1v7h-1zM599 762h1v7h-1zM600 762h1v7h-1zM601 762h1v7h-1zM602 758h1v11h-1zM603 758h1v11h-1zM604 758h1v11h-1zM605 758h1v11h-1zM606 762h1v7h-1zM607 758h1v11h-1zM608 762h1v7h-1zM609 758h1v14h-1zM610 758h1v14h-1zM611 762h1v10h-1zM612 762h1v10h-1zM613 762h1v10h-1zM614 762h1v10h-1zM615 758h1v14h-1zM616 758h1v14h-1zM617 758h1v14h-1zM618 758h1v14h-1zM619 758h1v11h-1zM620 758h1v14h-1zM621 762h1v10h-1zM622 762h1v10h-1zM623 762h1v10h-1zM624 762h1v10h-1zM625 762h1v7h-1zM626 762h1v7h-1zM627 758h1v14h-1zM628 758h1v14h-1zM629 758h1v14h-1zM630 762h1v10h-1zM631 762h1v10h-1zM632 762h1v7h-1zM633 762h1v10h-1zM634 758h1v14h-1zM635 762h1v7h-1zM636 762h1v7h-1zM637 758h1v11h-1zM638 758h1v11h-1zM639 758h1v11h-1zM640 762h1v7h-1zM641 758h1v11h-1zM642 758h1v14h-1zM643 758h1v14h-1zM644 758h1v14h-1zM645 758h1v14h-1zM646 758h1v14h-1zM647 762h1v10h-1zM648 762h1v10h-1zM649 762h1v10h-1zM650 762h1v10h-1zM651 762h1v10h-1zM652 762h1v10h-1zM653 760h1v12h-1zM654 762h1v10h-1zM655 762h1v10h-1zM656 762h1v10h-1zM657 762h1v10h-1zM658 762h1v12h-1zM659 762h1v10h-1zM660 762h1v10h-1zM661 762h1v10h-1zM662 762h1v10h-1zM663 762h1v10h-1zM664 762h1v10h-1zM665 762h1v10h-1zM666 762h1v10h-1zM667 762h1v10h-1zM668 758h1v14h-1zM669 762h1v10h-1zM670 762h1v10h-1zM671 762h1v10h-1zM672 762h1v10h-1zM673 762h1v10h-1zM674 754h1v15h-1zM675 758h1v14h-1zM676 758h1v14h-1zM677 762h1v10h-1zM678 758h1v14h-1zM679 758h1v11h-1zM680 758h1v11h-1zM681 758h1v11h-1zM682 758h1v11h-1zM683 758h1v11h-1zM684 758h1v11h-1zM685 758h1v11h-1zM686 758h1v14h-1zM687 758h1v11h-1zM688 762h1v9h-1zM689 758h1v11h-1zM690 758h1v11h-1zM691 758h1v11h-1zM692 758h1v11h-1zM693 758h1v11h-1zM694 758h1v11h-1zM695 758h1v11h-1zM696 758h1v11h-1zM697 758h1v11h-1zM698 758h1v11h-1zM699 758h1v11h-1zM700 758h1v11h-1zM701 758h1v11h-1zM702 758h1v11h-1zM703 758h1v14h-1zM704 762h1v10h-1zM705 758h1v14h-1zM706 758h1v14h-1zM707 758h1v14h-1zM708 758h1v14h-1zM709 758h1v11h-1zM710 755h1v17h-1zM711 758h1v14h-1zM712 758h1v11h-1zM713 758h1v11h-1zM714 758h1v11h-1zM715 758h1v11h-1zM716 758h1v11h-1zM717 758h1v11h-1zM718 758h1v11h-1zM719 758h1v11h-1zM720 758h1v11h-1zM721 758h1v11h-1zM722 758h1v11h-1zM723 758h1v11h-1zM724 758h1v11h-1zM725 758h1v11h-1zM726 758h1v11h-1zM727 758h1v11h-1zM728 758h1v11h-1zM729 758h1v11h-1zM730 758h1v14h-1zM731 758h1v14h-1zM732 758h1v14h-1zM733 758h1v14h-1zM734 758h1v14h-1zM735 762h1v10h-1zM736 762h1v10h-1zM737 758h1v14h-1zM738 758h1v14h-1zM739 758h1v14h-1zM740 758h1v14h-1zM741 758h1v14h-1zM742 758h1v18h-1zM743 762h1v10h-1zM744 762h1v10h-1zM745 762h1v10h-1zM746 758h1v14h-1zM747 758h1v14h-1zM748 758h1v14h-1zM749 758h1v14h-1zM750 758h1v14h-1zM751 758h1v14h-1zM752 762h1v10h-1zM753 762h1v10h-1zM754 762h1v7h-1zM755 762h1v10h-1zM756 762h1v10h-1zM757 762h1v7h-1zM758 762h1v10h-1zM759 762h1v10h-1zM760 762h1v10h-1zM761 762h1v7h-1zM762 762h1v7h-1zM763 762h1v7h-1zM764 762h1v7h-1zM765 762h1v7h-1zM766 762h1v7h-1zM767 762h1v7h-1zM768 758h1v11h-1zM769 762h1v7h-1zM770 762h1v7h-1zM771 762h1v7h-1zM772 758h1v14h-1zM773 758h1v14h-1zM774 758h1v14h-1zM775 758h1v14h-1zM776 758h1v14h-1zM777 758h1v14h-1zM778 758h1v14h-1zM779 758h1v14h-1zM780 758h1v14h-1zM781 758h1v14h-1zM782 758h1v11h-1zM783 758h1v11h-1zM784 758h1v11h-1zM785 758h1v11h-1zM786 758h1v11h-1zM787 762h1v7h-1zM788 758h1v11h-1zM789 762h1v7h-1zM790 762h1v10h-1zM791 762h1v10h-1zM792 762h1v10h-1zM793 762h1v10h-1zM794 758h1v14h-1zM795 758h1v14h-1zM796 758h1v14h-1zM797 758h1v14h-1zM798 758h1v14h-1zM799 758h1v14h-1zM800 758h1v14h-1zM801 758h1v11h-1zM802 758h1v14h-1zM803 758h1v14h-1zM804 758h1v16h-1zM805 762h1v10h-1zM806 758h1v11h-1zM807 758h1v14h-1zM808 758h1v14h-1zM809 758h1v14h-1zM810 758h1v11h-1zM811 758h1v11h-1zM812 758h1v11h-1zM813 758h1v11h-1zM814 762h1v7h-1zM815 740h1v51h-1zM816 745h1v40h-1zM817 758h1v11h-1zM818 758h1v11h-1zM819 762h1v7h-1zM820 758h1v11h-1zM821 758h1v11h-1zM822 758h1v11h-1zM823 758h1v11h-1zM824 758h1v11h-1zM825 758h1v11h-1zM826 758h1v11h-1zM827 758h1v11h-1zM828 758h1v14h-1zM829 758h1v14h-1zM830 758h1v14h-1zM831 758h1v14h-1zM832 758h1v14h-1zM833 762h1v10h-1zM834 762h1v10h-1zM835 762h1v10h-1zM836 758h1v14h-1zM837 758h1v14h-1zM838 758h1v14h-1zM839 758h1v14h-1zM840 758h1v14h-1zM841 758h1v14h-1zM842 758h1v14h-1zM843 758h1v11h-1zM844 762h1v7h-1zM845 762h1v7h-1zM846 762h1v7h-1zM847 762h1v7h-1zM848 762h1v7h-1zM849 762h1v7h-1zM850 758h1v11h-1zM851 758h1v14h-1zM852 758h1v11h-1zM853 758h1v11h-1zM854 762h1v7h-1zM855 758h1v11h-1zM856 758h1v14h-1zM857 758h1v16h-1zM858 758h1v11h-1zM859 758h1v11h-1zM860 758h1v11h-1zM861 762h1v7h-1zM862 762h1v10h-1zM863 762h1v7h-1zM864 762h1v7h-1zM865 758h1v14h-1zM866 758h1v14h-1zM867 758h1v14h-1zM868 743h1v54h-1zM869 750h1v40h-1zM870 758h1v14h-1zM871 758h1v14h-1zM872 758h1v14h-1zM873 758h1v14h-1zM874 758h1v11h-1zM875 758h1v11h-1zM876 758h1v14h-1zM877 758h1v14h-1zM878 758h1v14h-1zM879 758h1v11h-1zM880 758h1v14h-1zM881 758h1v14h-1zM882 758h1v14h-1zM883 758h1v14h-1zM884 758h1v17h-1zM885 758h1v14h-1zM886 758h1v14h-1zM887 758h1v14h-1zM888 758h1v14h-1zM889 758h1v14h-1zM890 758h1v14h-1zM891 758h1v14h-1zM892 758h1v14h-1zM893 758h1v11h-1zM894 758h1v14h-1zM895 758h1v11h-1zM896 758h1v11h-1zM897 762h1v7h-1zM898 762h1v7h-1zM899 762h1v7h-1zM900 762h1v7h-1zM901 762h1v7h-1zM902 762h1v7h-1zM903 762h1v7h-1zM904 758h1v11h-1zM905 758h1v14h-1zM906 758h1v14h-1zM907 758h1v14h-1zM908 762h1v10h-1zM909 758h1v11h-1zM910 758h1v11h-1zM911 758h1v14h-1zM912 758h1v11h-1zM913 758h1v11h-1zM914 758h1v11h-1zM915 762h1v7h-1zM916 762h1v7h-1zM917 762h1v7h-1zM918 762h1v7h-1zM919 758h1v11h-1zM920 758h1v14h-1zM921 758h1v14h-1zM922 758h1v14h-1zM923 740h1v48h-1zM924 748h1v32h-1zM925 758h1v14h-1zM926 758h1v14h-1zM927 758h1v14h-1zM928 762h1v10h-1zM929 758h1v11h-1zM930 758h1v14h-1zM931 758h1v14h-1zM932 758h1v14h-1zM933 758h1v14h-1zM934 758h1v11h-1zM935 762h1v7h-1zM936 762h1v7h-1zM937 762h1v7h-1zM938 762h1v7h-1zM939 762h1v7h-1zM940 762h1v10h-1zM941 762h1v10h-1zM942 762h1v7h-1zM943 762h1v10h-1zM944 762h1v10h-1zM945 758h1v14h-1zM946 762h1v10h-1zM947 762h1v10h-1zM948 762h1v10h-1zM949 762h1v10h-1zM950 762h1v10h-1zM951 762h1v10h-1zM952 762h1v10h-1zM953 762h1v10h-1zM954 762h1v10h-1zM955 762h1v10h-1zM956 762h1v10h-1zM957 762h1v10h-1zM958 762h1v10h-1zM959 758h1v11h-1zM960 758h1v14h-1zM961 758h1v14h-1zM962 758h1v11h-1zM963 758h1v14h-1zM964 758h1v14h-1zM965 758h1v14h-1zM966 762h1v10h-1zM967 758h1v14h-1zM968 758h1v14h-1zM969 758h1v14h-1zM970 758h1v14h-1zM971 758h1v14h-1zM972 758h1v11h-1zM973 758h1v14h-1zM974 758h1v14h-1zM975 758h1v14h-1zM976 758h1v14h-1zM977 758h1v14h-1zM978 758h1v14h-1zM979 758h1v14h-1zM980 758h1v14h-1zM981 758h1v14h-1zM982 758h1v14h-1zM983 758h1v14h-1zM984 758h1v14h-1zM985 758h1v14h-1zM986 758h1v18h-1zM987 758h1v14h-1zM988 758h1v14h-1zM989 758h1v14h-1zM990 758h1v14h-1zM991 758h1v11h-1zM992 758h1v11h-1zM993 758h1v11h-1zM994 758h1v11h-1zM995 758h1v11h-1zM996 758h1v11h-1zM997 758h1v11h-1zM998 758h1v14h-1zM999 758h1v11h-1zM1000 758h1v11h-1zM1001 758h1v14h-1zM1002 758h1v14h-1zM1003 758h1v14h-1zM1004 758h1v14h-1zM1005 762h1v10h-1zM1006 758h1v14h-1zM1007 758h1v11h-1zM1008 758h1v14h-1zM1009 758h1v14h-1zM1010 758h1v14h-1zM1011 758h1v14h-1zM1012 762h1v10h-1zM1013 762h1v10h-1zM1014 762h1v10h-1zM1015 758h1v14h-1zM1016 758h1v14h-1zM1017 758h1v14h-1zM1018 758h1v14h-1zM1019 758h1v11h-1zM1020 758h1v11h-1zM1021 758h1v11h-1zM1022 758h1v11h-1zM1023 762h1v7h-1zM1024 755h1v14h-1zM1025 758h1v14h-1zM1026 758h1v14h-1zM1027 758h1v14h-1zM1028 758h1v14h-1zM1029 758h1v14h-1zM1030 762h1v10h-1zM1031 762h1v12h-1zM1032 762h1v10h-1zM1033 758h1v14h-1zM1034 758h1v14h-1zM1035 758h1v14h-1zM1036 758h1v11h-1zM1037 758h1v14h-1zM1038 762h1v10h-1zM1039 758h1v14h-1zM1040 758h1v14h-1zM1041 758h1v11h-1zM1042 758h1v11h-1zM1043 758h1v11h-1zM1044 758h1v11h-1zM1045 758h1v11h-1zM1046 758h1v11h-1zM1047 758h1v14h-1zM1048 758h1v11h-1zM1049 758h1v11h-1zM1050 758h1v14h-1zM1051 758h1v14h-1zM1052 762h1v10h-1zM1053 758h1v14h-1zM1054 757h1v15h-1zM1055 762h1v10h-1zM1056 762h1v7h-1zM1057 762h1v10h-1zM1058 758h1v11h-1zM1059 762h1v7h-1zM1060 758h1v11h-1zM1061 762h1v7h-1zM1062 762h1v7h-1zM1063 762h1v7h-1zM1064 762h1v7h-1zM1065 762h1v7h-1zM1066 762h1v7h-1zM1067 758h1v11h-1zM1068 758h1v11h-1zM1069 758h1v14h-1zM1070 758h1v11h-1zM1071 758h1v14h-1zM1072 758h1v14h-1zM1073 758h1v14h-1zM1074 758h1v14h-1zM1075 758h1v14h-1zM1076 758h1v14h-1zM1077 762h1v7h-1zM1078 762h1v10h-1zM1079 762h1v10h-1zM1080 762h1v10h-1zM1081 762h1v10h-1zM1082 762h1v10h-1zM1083 762h1v10h-1zM1084 762h1v10h-1zM1085 762h1v7h-1zM1086 762h1v7h-1zM1087 762h1v7h-1zM1088 758h1v11h-1zM1089 762h1v7h-1zM1090 762h1v7h-1zM1091 762h1v7h-1zM1092 762h1v7h-1zM1093 762h1v7h-1zM1094 762h1v7h-1zM1095 762h1v10h-1zM1096 762h1v7h-1zM1097 760h1v9h-1zM1098 762h1v7h-1zM1099 762h1v7h-1zM1100 762h1v7h-1zM1101 762h1v7h-1zM1102 762h1v7h-1zM1103 762h1v7h-1zM1104 758h1v14h-1zM1105 753h1v16h-1zM1106 758h1v11h-1zM1107 758h1v11h-1zM1108 762h1v7h-1zM1109 762h1v7h-1zM1110 762h1v7h-1zM1111 758h1v11h-1zM1112 758h1v11h-1zM1113 758h1v11h-1zM1114 758h1v11h-1zM1115 758h1v11h-1zM1116 758h1v11h-1zM1117 758h1v15h-1zM1118 762h1v7h-1zM1119 758h1v14h-1zM1120 758h1v14h-1zM1121 758h1v11h-1zM1122 758h1v14h-1zM1123 758h1v14h-1zM1124 758h1v11h-1zM1125 758h1v14h-1zM1126 758h1v14h-1zM1127 758h1v14h-1zM1128 762h1v10h-1zM1129 758h1v14h-1zM1130 758h1v14h-1zM1131 758h1v14h-1zM1132 758h1v14h-1zM1133 758h1v14h-1zM1134 758h1v11h-1zM1135 758h1v11h-1zM1136 753h1v16h-1zM1137 758h1v11h-1zM1138 758h1v14h-1zM1139 758h1v14h-1zM1140 758h1v14h-1zM1141 758h1v14h-1zM1142 762h1v10h-1zM1143 758h1v14h-1zM1144 758h1v14h-1zM1145 762h1v10h-1zM1146 758h1v14h-1zM1147 758h1v14h-1zM1148 758h1v11h-1zM1149 758h1v11h-1zM1150 758h1v11h-1zM1151 758h1v11h-1zM1152 758h1v11h-1zM1153 758h1v11h-1zM1154 758h1v11h-1zM1155 762h1v10h-1zM1156 758h1v14h-1zM1157 758h1v14h-1zM1158 758h1v14h-1zM1159 758h1v14h-1zM1160 758h1v14h-1zM1161 758h1v14h-1zM1162 758h1v14h-1zM1163 758h1v14h-1zM1164 758h1v14h-1zM1165 758h1v14h-1zM1166 758h1v11h-1zM1167 758h1v14h-1zM1168 758h1v11h-1zM1169 762h1v7h-1zM1170 758h1v11h-1zM1171 758h1v11h-1zM1172 762h1v7h-1zM1173 758h1v11h-1zM1174 762h1v9h-1zM1175 762h1v7h-1zM1176 762h1v10h-1zM1177 762h1v10h-1zM1178 762h1v10h-1zM1179 762h1v10h-1zM1180 762h1v10h-1zM1181 762h1v7h-1zM1182 762h1v7h-1zM1183 762h1v7h-1zM1184 762h1v7h-1zM1185 762h1v7h-1zM1186 758h1v11h-1zM1187 758h1v14h-1zM1188 762h1v10h-1zM1189 758h1v14h-1zM1190 758h1v14h-1zM1191 758h1v11h-1zM1192 758h1v14h-1zM1193 762h1v10h-1zM1194 758h1v11h-1zM1195 758h1v14h-1zM1196 758h1v11h-1zM1197 758h1v14h-1zM1198 758h1v14h-1zM1199 758h1v14h-1zM1200 758h1v14h-1zM1201 758h1v11h-1zM1202 758h1v14h-1zM1203 758h1v14h-1zM1204 758h1v14h-1zM1205 758h1v14h-1zM1206 758h1v11h-1zM1207 758h1v11h-1zM1208 758h1v14h-1zM1209 758h1v14h-1zM1210 758h1v14h-1zM1211 758h1v14h-1zM1212 758h1v14h-1zM1213 762h1v7h-1zM1214 762h1v7h-1zM1215 762h1v10h-1zM1216 762h1v10h-1zM1217 762h1v10h-1zM1218 762h1v10h-1zM1219 762h1v10h-1zM1220 762h1v10h-1zM1221 758h1v14h-1zM1222 758h1v11h-1zM1223 758h1v14h-1zM1224 758h1v14h-1zM1225 758h1v14h-1zM1226 758h1v14h-1zM1227 758h1v14h-1zM1228 758h1v14h-1zM1229 758h1v14h-1zM1230 758h1v14h-1zM1231 762h1v10h-1zM1232 758h1v11h-1zM1233 758h1v11h-1zM1234 758h1v11h-1zM1235 758h1v14h-1zM1236 758h1v14h-1zM1237 758h1v14h-1zM1238 758h1v14h-1zM1239 758h1v14h-1zM1240 758h1v14h-1zM1241 758h1v14h-1zM1242 758h1v14h-1zM1243 758h1v14h-1zM1244 758h1v14h-1zM1245 758h1v14h-1zM1246 758h1v14h-1zM1247 758h1v11h-1zM1248 762h1v7h-1zM1249 758h1v11h-1zM1250 758h1v11h-1zM1251 758h1v11h-1zM1252 758h1v11h-1zM1253 758h1v14h-1zM1254 758h1v11h-1zM1255 758h1v11h-1zM1256 762h1v7h-1zM1257 762h1v7h-1zM1258 762h1v10h-1zM1259 762h1v10h-1zM1260 762h1v10h-1zM1261 758h1v14h-1zM1262 758h1v11h-1zM1263 762h1v10h-1zM1264 758h1v14h-1zM1265 758h1v14h-1zM1266 758h1v14h-1zM1267 758h1v14h-1zM1268 758h1v14h-1zM1269 758h1v14h-1zM1270 758h1v14h-1zM1271 758h1v11h-1zM1272 758h1v11h-1zM1273 758h1v11h-1zM1274 758h1v14h-1zM1275 758h1v14h-1zM1276 758h1v14h-1zM1277 758h1v14h-1zM1278 758h1v14h-1zM1279 762h1v10h-1zM1280 762h1v10h-1zM1281 762h1v10h-1zM1282 762h1v10h-1zM1283 762h1v10h-1zM1284 762h1v10h-1zM1285 762h1v10h-1zM1286 758h1v11h-1zM1287 758h1v11h-1zM1288 762h1v7h-1zM1289 758h1v14h-1zM1290 758h1v14h-1zM1291 758h1v14h-1zM1292 758h1v16h-1zM1293 758h1v14h-1zM1294 758h1v14h-1zM1295 758h1v14h-1zM1296 758h1v14h-1zM1297 758h1v14h-1zM1298 758h1v14h-1zM1299 762h1v10h-1zM1300 758h1v14h-1zM1301 760h1v12h-1zM1302 762h1v10h-1zM1303 758h1v14h-1zM1304 758h1v14h-1zM1305 758h1v14h-1zM1306 758h1v14h-1zM1307 758h1v14h-1zM1308 758h1v14h-1zM1309 758h1v14h-1zM1310 758h1v14h-1zM1311 758h1v14h-1zM1312 758h1v14h-1zM1313 758h1v14h-1zM1314 758h1v14h-1zM1315 758h1v14h-1zM1316 758h1v14h-1zM1317 758h1v14h-1zM1318 758h1v14h-1zM1319 758h1v14h-1zM1320 758h1v14h-1zM1321 758h1v14h-1zM1322 758h1v14h-1zM1323 758h1v14h-1zM1324 762h1v10h-1zM1325 762h1v10h-1zM1326 758h1v11h-1zM1327 758h1v11h-1zM1328 758h1v11h-1zM1329 758h1v14h-1zM1330 762h1v10h-1zM1331 762h1v10h-1zM1332 762h1v10h-1zM1333 758h1v14h-1zM1334 758h1v14h-1zM1335 762h1v10h-1zM1336 762h1v10h-1zM1337 762h1v10h-1zM1338 762h1v10h-1zM1339 762h1v10h-1zM1340 762h1v7h-1zM1341 762h1v10h-1zM1342 762h1v10h-1zM1343 762h1v7h-1zM1344 762h1v10h-1zM1345 762h1v10h-1zM1346 762h1v10h-1zM1347 762h1v10h-1zM1348 762h1v10h-1zM1349 762h1v10h-1zM1350 762h1v10h-1zM1351 758h1v14h-1zM1352 758h1v14h-1zM1353 758h1v14h-1zM1354 758h1v14h-1zM1355 758h1v14h-1zM1356 762h1v10h-1zM1357 758h1v14h-1zM1358 758h1v14h-1zM1359 758h1v14h-1zM1360 758h1v14h-1zM1361 758h1v14h-1zM1362 758h1v11h-1zM1363 762h1v7h-1zM1364 758h1v11h-1zM1365 758h1v14h-1zM1366 758h1v14h-1zM1367 758h1v14h-1zM1368 758h1v14h-1zM1369 758h1v14h-1zM1370 758h1v14h-1zM1371 762h1v10h-1zM1372 762h1v10h-1zM1373 762h1v10h-1zM1374 758h1v14h-1zM1375 758h1v14h-1zM1376 758h1v11h-1zM1377 758h1v14h-1zM1378 762h1v10h-1zM1379 758h1v14h-1zM1380 762h1v10h-1zM1381 758h1v14h-1zM1382 758h1v13h-1zM1383 758h1v14h-1zM1384 762h1v10h-1zM1385 758h1v14h-1zM1386 758h1v14h-1zM1387 758h1v14h-1zM1388 758h1v14h-1zM1389 758h1v14h-1zM1390 756h1v16h-1zM1391 758h1v14h-1zM1392 758h1v14h-1zM1393 758h1v14h-1zM1394 762h1v10h-1zM1395 762h1v10h-1zM1396 762h1v10h-1zM1397 762h1v10h-1zM1398 762h1v10h-1zM1399 762h1v10h-1zM1400 762h1v10h-1zM1401 758h1v11h-1zM1402 762h1v10h-1zM1403 762h1v10h-1zM1404 762h1v10h-1zM1405 762h1v7h-1zM1406 762h1v7h-1zM1407 758h1v11h-1zM1408 758h1v14h-1zM1409 758h1v14h-1zM1410 758h1v11h-1zM1411 758h1v11h-1zM1412 758h1v14h-1zM1413 758h1v14h-1zM1414 762h1v10h-1zM1415 762h1v10h-1zM1416 762h1v7h-1zM1417 758h1v11h-1zM1418 758h1v11h-1zM1419 758h1v11h-1zM1420 758h1v11h-1zM1421 762h1v7h-1zM1422 762h1v7h-1zM1423 762h1v10h-1zM1424 762h1v10h-1zM1425 758h1v14h-1zM1426 762h1v10h-1zM1427 762h1v10h-1zM1428 762h1v10h-1zM1429 762h1v10h-1zM1430 762h1v7h-1zM1431 762h1v7h-1zM1432 758h1v11h-1zM1433 758h1v11h-1zM1434 762h1v7h-1zM1435 762h1v7h-1zM1436 762h1v10h-1zM1437 758h1v11h-1zM1438 762h1v7h-1zM1439 758h1v11h-1zM1440 758h1v11h-1zM1441 758h1v11h-1zM1442 758h1v11h-1zM1443 758h1v11h-1zM1444 758h1v11h-1zM1445 758h1v11h-1zM1446 758h1v11h-1zM1447 758h1v11h-1zM1448 758h1v11h-1zM1449 758h1v11h-1zM1450 758h1v11h-1zM1451 758h1v11h-1zM1452 758h1v11h-1zM1453 758h1v14h-1zM1454 758h1v11h-1zM1455 758h1v11h-1zM1456 758h1v14h-1zM1457 758h1v14h-1zM1458 758h1v14h-1zM1459 758h1v14h-1zM1460 758h1v11h-1zM1461 758h1v11h-1zM1462 758h1v18h-1zM1463 758h1v14h-1zM1464 758h1v14h-1zM1465 758h1v11h-1zM1466 758h1v14h-1zM1467 758h1v14h-1zM1468 758h1v14h-1zM1469 758h1v14h-1zM1470 758h1v14h-1zM1471 758h1v14h-1zM1472 758h1v14h-1zM1473 758h1v11h-1zM1474 758h1v11h-1zM1475 758h1v11h-1zM1476 758h1v11h-1zM1477 758h1v11h-1zM1478 758h1v11h-1zM1479 758h1v11h-1zM1480 762h1v7h-1zM1481 758h1v11h-1zM1482 758h1v11h-1zM1483 762h1v7h-1zM1484 762h1v7h-1zM1485 758h1v14h-1zM1486 758h1v14h-1zM1487 758h1v14h-1zM1488 758h1v14h-1zM1489 758h1v14h-1zM1490 758h1v14h-1zM1491 758h1v14h-1zM1492 758h1v11h-1zM1493 758h1v14h-1zM1494 758h1v14h-1zM1495 758h1v14h-1zM1496 758h1v11h-1zM1497 758h1v11h-1zM1498 758h1v18h-1zM1499 762h1v10h-1zM1500 762h1v10h-1zM1501 762h1v10h-1zM1502 762h1v7h-1zM1503 758h1v14h-1zM1504 762h1v10h-1zM1505 762h1v7h-1zM1506 758h1v11h-1zM1507 758h1v11h-1zM1508 758h1v11h-1zM1509 762h1v7h-1zM1510 758h1v11h-1zM1511 762h1v10h-1zM1512 762h1v10h-1zM1513 762h1v7h-1zM1514 762h1v10h-1zM1515 762h1v10h-1zM1516 758h1v14h-1zM1517 762h1v10h-1zM1518 762h1v10h-1zM1519 762h1v10h-1zM1520 762h1v10h-1zM1521 762h1v10h-1zM1522 762h1v10h-1zM1523 762h1v10h-1zM1524 762h1v7h-1zM1525 758h1v14h-1zM1526 758h1v14h-1zM1527 758h1v11h-1zM1528 758h1v11h-1zM1529 758h1v11h-1zM1530 758h1v11h-1zM1531 762h1v7h-1zM1532 758h1v14h-1zM1533 758h1v11h-1zM1534 758h1v11h-1zM1535 762h1v10h-1zM1536 758h1v14h-1zM1537 762h1v10h-1zM1538 758h1v14h-1zM1539 758h1v14h-1zM1540 758h1v14h-1zM1541 758h1v14h-1zM1542 758h1v14h-1zM1543 758h1v14h-1zM1544 758h1v14h-1zM1545 758h1v16h-1zM1546 758h1v11h-1zM1547 758h1v11h-1zM1548 762h1v7h-1zM1549 758h1v11h-1zM1550 758h1v14h-1zM1551 758h1v14h-1zM1552 758h1v11h-1zM1553 758h1v11h-1zM1554 762h1v10h-1zM1555 758h1v11h-1zM1556 758h1v14h-1zM1557 758h1v14h-1zM1558 758h1v14h-1zM1559 758h1v14h-1zM1560 762h1v7h-1zM1561 758h1v11h-1zM1562 758h1v11h-1zM1563 758h1v11h-1zM1564 758h1v11h-1zM1565 758h1v11h-1zM1566 762h1v10h-1zM1567 758h1v14h-1zM1568 758h1v14h-1zM1569 758h1v14h-1zM1570 762h1v10h-1zM1571 762h1v10h-1zM1572 762h1v10h-1zM1573 762h1v10h-1zM1574 758h1v14h-1zM1575 758h1v14h-1zM1576 758h1v14h-1zM1577 758h1v11h-1zM1578 758h1v11h-1zM1579 762h1v7h-1zM1580 762h1v7h-1zM1581 762h1v7h-1zM1582 758h1v11h-1zM1583 762h1v10h-1zM1584 758h1v11h-1zM1585 758h1v14h-1zM1586 758h1v14h-1zM1587 758h1v14h-1zM1588 758h1v14h-1zM1589 758h1v14h-1zM1590 758h1v14h-1zM1591 758h1v16h-1zM1592 758h1v14h-1zM1593 758h1v14h-1zM1594 758h1v14h-1zM1595 758h1v14h-1zM1596 758h1v14h-1zM1597 762h1v10h-1zM1598 758h1v14h-1zM1599 758h1v14h-1zM1600 758h1v14h-1zM1601 762h1v10h-1zM1602 762h1v10h-1zM1603 762h1v7h-1zM1604 758h1v11h-1zM1605 762h1v7h-1zM1606 762h1v7h-1z"/>
<path fill="#00d400" d="M28 363h1v19h-1zM29 363h1v19h-1zM30 366h1v23h-1zM31 370h1v12h-1zM32 370h1v19h-1zM33 366h1v16h-1zM34 363h1v23h-1zM35 370h1v12h-1zM36 370h1v12h-1zM37 370h1v12h-1zM38 370h1v23h-1zM39 370h1v12h-1zM40 370h1v12h-1zM41 370h1v12h-1zM42 370h1v12h-1zM43 370h1v19h-1zM44 366h1v20h-1zM45 363h1v19h-1zM46 366h1v16h-1zM47 366h1v23h-1zM48 366h1v20h-1zM49 366h1v16h-1zM50 366h1v20h-1zM51 366h1v16h-1zM52 363h1v23h-1zM53 363h1v30h-1zM54 366h1v23h-1zM55 366h1v20h-1zM56 363h1v26h-1zM57 366h1v23h-1zM58 366h1v20h-1zM59 370h1v16h-1zM60 366h1v16h-1zM61 366h1v16h-1zM62 366h1v16h-1zM63 363h1v23h-1zM64 370h1v16h-1zM65 370h1v16h-1zM66 366h1v16h-1zM67 366h1v20h-1zM68 366h1v16h-1zM69 366h1v16h-1zM70 366h1v20h-1zM71 366h1v23h-1zM72 366h1v16h-1zM73 366h1v20h-1zM74 366h1v20h-1zM75 366h1v20h-1zM76 366h1v20h-1zM77 366h1v20h-1zM78 366h1v20h-1zM79 366h1v34h-1zM80 366h1v20h-1zM81 366h1v23h-1zM82 363h1v23h-1zM83 366h1v20h-1zM84 370h1v16h-1zM85 370h1v16h-1zM86 370h1v16h-1zM87 370h1v16h-1zM88 370h1v16h-1zM89 366h1v23h-1zM90 366h1v16h-1zM91 366h1v16h-1zM92 366h1v20h-1zM93 359h1v23h-1zM94 370h1v26h-1zM95 370h1v16h-1zM96 370h1v16h-1zM97 366h1v20h-1zM98 366h1v20h-1zM99 366h1v16h-1zM100 366h1v16h-1zM101 366h1v16h-1zM102 366h1v16h-1zM103 366h1v20h-1zM104 366h1v20h-1zM105 366h1v20h-1zM106 366h1v20h-1zM107 370h1v19h-1zM108 370h1v19h-1zM109 370h1v12h-1zM110 370h1v19h-1zM111 366h1v23h-1zM112 366h1v23h-1zM113 366h1v16h-1zM114 370h1v19h-1zM115 370h1v16h-1zM116 370h1v16h-1zM117 370h1v12h-1zM118 370h1v12h-1zM119 370h1v12h-1zM120 370h1v12h-1zM121 366h1v20h-1zM122 370h1v12h-1zM123 366h1v16h-1zM124 366h1v20h-1zM125 366h1v16h-1zM126 366h1v16h-1zM127 363h1v19h-1zM128 366h1v16h-1zM129 370h1v19h-1zM130 370h1v16h-1zM131 366h1v16h-1zM132 366h1v16h-1zM133 366h1v20h-1zM134 366h1v20h-1zM135 370h1v16h-1zM136 366h1v20h-1zM137 370h1v16h-1zM138 370h1v16h-1zM139 366h1v23h-1zM140 366h1v20h-1zM141 370h1v16h-1zM142 370h1v16h-1zM143 370h1v12h-1zM144 370h1v12h-1zM145 366h1v16h-1zM146 370h1v12h-1zM147 366h1v20h-1zM148 366h1v23h-1zM149 366h1v16h-1zM150 366h1v16h-1zM151 366h1v16h-1zM152 366h1v20h-1zM153 366h1v20h-1zM154 366h1v16h-1zM155 366h1v16h-1zM156 366h1v23h-1zM157 366h1v16h-1zM158 366h1v16h-1zM159 366h1v16h-1zM160 370h1v12h-1zM161 366h1v23h-1zM162 370h1v12h-1zM163 370h1v16h-1zM164 370h1v19h-1zM165 370h1v16h-1zM166 370h1v16h-1zM167 366h1v16h-1zM168 366h1v16h-1zM169 370h1v16h-1zM170 366h1v23h-1zM171 366h1v16h-1zM172 370h1v12h-1zM173 366h1v16h-1zM174 370h1v16h-1zM175 370h1v16h-1zM176 366h1v20h-1zM177 366h1v16h-1zM178 363h1v23h-1zM179 366h1v20h-1zM180 363h1v19h-1zM181 370h1v12h-1zM182 370h1v12h-1zM183 370h1v19h-1zM184 366h1v20h-1zM185 366h1v16h-1zM186 370h1v12h-1zM187 370h1v12h-1zM188 370h1v19h-1zM189 370h1v12h-1zM190 366h1v16h-1zM191 366h1v23h-1zM192 366h1v16h-1zM193 366h1v20h-1zM194 366h1v30h-1zM195 366h1v20h-1zM196 355h1v31h-1zM197 370h1v12h-1zM198 366h1v16h-1zM199 370h1v12h-1zM200 363h1v19h-1zM201 370h1v16h-1zM202 366h1v16h-1zM203 370h1v12h-1zM204 370h1v12h-1zM205 366h1v20h-1zM206 366h1v16h-1zM207 366h1v20h-1zM208 366h1v23h-1zM209 370h1v12h-1zM210 370h1v12h-1zM211 370h1v12h-1zM212 370h1v16h-1zM213 370h1v16h-1zM214 366h1v20h-1zM215 370h1v12h-1zM216 363h1v19h-1zM217 370h1v19h-1zM218 370h1v16h-1zM219 370h1v12h-1zM220 370h1v16h-1zM221 366h1v23h-1zM222 366h1v16h-1zM223 363h1v19h-1zM224 370h1v12h-1zM225 370h1v12h-1zM226 370h1v12h-1zM227 370h1v26h-1zM228 370h1v16h-1zM229 366h1v27h-1zM230 366h1v16h-1zM231 370h1v16h-1zM232 363h1v26h-1zM233 370h1v12h-1zM234 370h1v12h-1zM235 370h1v12h-1zM236 370h1v12h-1zM237 366h1v20h-1zM238 366h1v20h-1zM239 370h1v16h-1zM240 370h1v16h-1zM241 370h1v16h-1zM242 366h1v20h-1zM243 366h1v16h-1zM244 366h1v16h-1zM245 366h1v20h-1zM246 366h1v23h-1zM247 370h1v12h-1zM248 366h1v20h-1zM249 366h1v20h-1zM250 370h1v16h-1zM251 370h1v12h-1zM252 370h1v19h-1zM253 366h1v20h-1zM254 370h1v16h-1zM255 370h1v16h-1zM256 366h1v20h-1zM257 370h1v16h-1zM258 363h1v23h-1zM259 359h1v23h-1zM260 370h1v16h-1zM261 370h1v12h-1zM262 370h1v16h-1zM263 370h1v12h-1zM264 370h1v16h-1zM265 370h1v16h-1zM266 370h1v19h-1zM267 370h1v12h-1zM268 370h1v16h-1zM269 370h1v16h-1zM270 366h1v20h-1zM271 370h1v12h-1zM272 370h1v12h-1zM273 366h1v16h-1zM274 370h1v19h-1zM275 370h1v12h-1zM276 363h1v19h-1zM277 366h1v16h-1zM278 366h1v16h-1zM279 366h1v16h-1zM280 366h1v20h-1zM281 363h1v23h-1zM282 366h1v20h-1zM283 366h1v20h-1zM284 366h1v20h-1zM285 366h1v23h-1zM286 366h1v20h-1zM287 366h1v20h-1zM288 366h1v20h-1zM289 366h1v20h-1zM290 363h1v23h-1zM291 366h1v20h-1zM292 366h1v20h-1zM293 370h1v16h-1zM294 370h1v16h-1zM295 370h1v16h-1zM296 370h1v19h-1zM297 370h1v16h-1zM298 366h1v16h-1zM299 366h1v16h-1zM300 366h1v20h-1zM301 366h1v20h-1zM302 366h1v20h-1zM303 366h1v20h-1zM304 366h1v20h-1zM305 366h1v27h-1zM306 363h1v23h-1zM307 366h1v20h-1zM308 366h1v23h-1zM309 366h1v20h-1zM310 370h1v16h-1zM311 370h1v16h-1zM312 370h1v12h-1zM313 370h1v12h-1zM314 366h1v16h-1zM315 366h1v20h-1zM316 366h1v20h-1zM317 370h1v12h-1zM318 370h1v12h-1zM319 370h1v12h-1zM320 370h1v12h-1zM321 370h1v12h-1zM322 370h1v12h-1zM323 370h1v19h-1zM324 370h1v19h-1zM325 370h1v12h-1zM326 370h1v16h-1zM327 370h1v26h-1zM328 366h1v23h-1zM329 366h1v16h-1zM330 366h1v16h-1zM331 366h1v16h-1zM332 366h1v16h-1zM333 366h1v20h-1zM334 366h1v23h-1zM335 366h1v20h-1zM336 366h1v23h-1zM337 363h1v23h-1zM338 366h1v20h-1zM339 366h1v23h-1zM340 366h1v20h-1zM341 366h1v20h-1zM342 366h1v20h-1zM343 370h1v16h-1zM344 370h1v16h-1zM345 366h1v16h-1zM346 370h1v16h-1zM347 366h1v16h-1zM348 366h1v16h-1zM349 366h1v16h-1zM350 370h1v16h-1zM351 366h1v16h-1zM352 370h1v12h-1zM353 366h1v20h-1zM354 370h1v16h-1zM355 366h1v20h-1zM356 370h1v16h-1zM357 370h1v19h-1zM358 355h1v27h-1zM359 370h1v16h-1zM360 370h1v16h-1zM361 366h1v20h-1zM362 370h1v16h-1zM363 366h1v23h-1zM364 366h1v20h-1zM365 370h1v16h-1zM366 370h1v19h-1zM367 370h1v12h-1zM368 370h1v12h-1zM369 366h1v16h-1zM370 370h1v12h-1zM371 366h1v16h-1zM372 366h1v16h-1zM373 366h1v16h-1zM374 366h1v16h-1zM375 366h1v16h-1zM376 366h1v20h-1zM377 370h1v16h-1zM378 370h1v16h-1zM379 370h1v19h-1zM380 370h1v16h-1zM381 370h1v16h-1zM382 370h1v16h-1zM383 370h1v23h-1zM384 370h1v16h-1zM385 366h1v20h-1zM386 370h1v12h-1zM387 370h1v12h-1zM388 370h1v16h-1zM389 366h1v20h-1zM390 366h1v23h-1zM391 366h1v20h-1zM392 366h1v20h-1zM393 366h1v16h-1zM394 366h1v16h-1zM395 370h1v12h-1zM396 366h1v16h-1zM397 363h1v19h-1zM398 366h1v16h-1zM399 370h1v16h-1zM400 370h1v12h-1zM401 366h1v16h-1zM402 366h1v16h-1zM403 366h1v23h-1zM404 366h1v20h-1zM405 366h1v20h-1zM406 363h1v19h-1zM407 366h1v20h-1zM408 366h1v20h-1zM409 363h1v23h-1zM410 370h1v19h-1zM411 370h1v12h-1zM412 370h1v23h-1zM413 366h1v20h-1zM414 370h1v16h-1zM415 370h1v19h-1zM416 370h1v19h-1zM417 370h1v12h-1zM418 370h1v12h-1zM419 370h1v16h-1zM420 370h1v23h-1zM421 370h1v16h-1zM422 366h1v16h-1zM423 370h1v12h-1zM424 370h1v23h-1zM425 366h1v16h-1zM426 370h1v12h-1zM427 366h1v20h-1zM428 366h1v23h-1zM429 370h1v16h-1zM430 370h1v16h-1zM431 370h1v16h-1zM432 370h1v16h-1zM433 370h1v16h-1zM434 366h1v27h-1zM435 366h1v20h-1zM436 366h1v20h-1zM437 366h1v20h-1zM438 363h1v19h-1zM439 366h1v16h-1zM440 355h1v34h-1zM441 366h1v23h-1zM442 366h1v23h-1zM443 366h1v20h-1zM444 366h1v20h-1zM445 366h1v20h-1zM446 366h1v20h-1zM447 366h1v23h-1zM448 366h1v20h-1zM449 366h1v16h-1zM450 366h1v20h-1zM451 370h1v12h-1zM452 370h1v12h-1zM453 370h1v23h-1zM454 370h1v16h-1zM455 373h1v13h-1zM456 373h1v16h-1zM457 366h1v20h-1zM458 373h1v13h-1zM459 373h1v13h-1zM460 373h1v16h-1zM461 373h1v13h-1zM462 373h1v13h-1zM463 373h1v13h-1zM464 373h1v16h-1zM465 373h1v13h-1zM466 373h1v13h-1zM467 373h1v16h-1zM468 370h1v16h-1zM469 370h1v19h-1zM470 370h1v19h-1zM471 370h1v23h-1zM472 370h1v19h-1zM473 370h1v19h-1zM474 370h1v19h-1zM475 363h1v23h-1zM476 370h1v19h-1zM477 373h1v13h-1zM478 370h1v19h-1zM479 370h1v30h-1zM480 373h1v20h-1zM481 373h1v16h-1zM482 373h1v16h-1zM483 370h1v23h-1zM484 370h1v26h-1zM485 366h1v30h-1zM486 370h1v23h-1zM487 373h1v16h-1zM488 370h1v19h-1zM489 373h1v16h-1zM490 370h1v26h-1zM491 373h1v16h-1zM492 377h1v12h-1zM493 377h1v12h-1zM494 373h1v20h-1zM495 373h1v20h-1zM496 373h1v20h-1zM497 373h1v20h-1zM498 373h1v16h-1zM499 373h1v16h-1zM500 373h1v23h-1zM501 370h1v19h-1zM502 370h1v19h-1zM503 373h1v16h-1zM504 370h1v19h-1zM505 373h1v16h-1zM506 373h1v16h-1zM507 373h1v16h-1zM508 373h1v16h-1zM509 373h1v20h-1zM510 373h1v16h-1zM511 373h1v20h-1zM512 377h1v16h-1zM513 377h1v12h-1zM514 377h1v12h-1zM515 377h1v12h-1zM516 377h1v12h-1zM517 377h1v12h-1zM518 377h1v16h-1zM519 377h1v16h-1zM520 377h1v12h-1zM521 377h1v12h-1zM522 377h1v12h-1zM523 377h1v12h-1zM524 377h1v23h-1zM525 377h1v12h-1zM526 373h1v16h-1zM527 377h1v12h-1zM528 377h1v12h-1zM529 377h1v12h-1zM530 377h1v12h-1zM531 377h1v12h-1zM532 370h1v23h-1zM533 370h1v23h-1zM534 373h1v23h-1zM535 373h1v20h-1zM536 370h1v23h-1zM537 373h1v16h-1zM538 377h1v12h-1zM539 373h1v20h-1zM540 373h1v20h-1zM541 377h1v16h-1zM542 377h1v16h-1zM543 377h1v16h-1zM544 377h1v16h-1zM545 377h1v16h-1zM546 377h1v12h-1zM547 377h1v16h-1zM548 377h1v12h-1zM549 377h1v12h-1zM550 373h1v16h-1zM551 373h1v20h-1zM552 373h1v23h-1zM553 377h1v19h-1zM554 377h1v16h-1zM555 377h1v16h-1zM556 373h1v34h-1zM557 377h1v16h-1zM558 377h1v16h-1zM559 377h1v16h-1zM560 377h1v16h-1zM561 377h1v16h-1zM562 377h1v16h-1zM563 377h1v16h-1zM564 377h1v16h-1zM565 377h1v16h-1zM566 377h1v19h-1zM567 377h1v19h-1zM568 373h1v23h-1zM569 377h1v19h-1zM570 377h1v23h-1zM571 377h1v19h-1zM572 377h1v19h-1zM573 380h1v13h-1zM574 380h1v13h-1zM575 380h1v16h-1zM576 380h1v16h-1zM577 380h1v16h-1zM578 380h1v20h-1zM579 380h1v13h-1zM580 380h1v13h-1zM581 380h1v13h-1zM582 377h1v16h-1zM583 377h1v19h-1zM584 377h1v19h-1zM585 377h1v19h-1zM586 380h1v20h-1zM587 380h1v16h-1zM588 373h1v20h-1zM589 377h1v19h-1zM590 377h1v19h-1zM591 377h1v19h-1zM592 377h1v19h-1zM593 377h1v26h-1zM594 380h1v16h-1zM595 380h1v23h-1zM596 380h1v13h-1zM597 377h1v16h-1zM598 377h1v16h-1zM599 377h1v30h-1zM600 377h1v16h-1zM601 377h1v16h-1zM602 373h1v30h-1zM603 377h1v19h-1zM604 373h1v23h-1zM605 373h1v23h-1zM606 377h1v19h-1zM607 377h1v16h-1zM608 377h1v16h-1zM609 380h1v16h-1zM610 377h1v16h-1zM611 377h1v23h-1zM612 377h1v16h-1zM613 373h1v20h-1zM614 377h1v16h-1zM615 380h1v20h-1zM616 380h1v16h-1zM617 380h1v16h-1zM618 380h1v13h-1zM619 380h1v13h-1zM620 380h1v13h-1zM621 380h1v13h-1zM622 380h1v20h-1zM623 380h1v13h-1zM624 377h1v16h-1zM625 377h1v19h-1zM626 377h1v19h-1zM627 377h1v19h-1zM628 377h1v26h-1zM629 377h1v16h-1zM630 377h1v19h-1zM631 377h1v19h-1zM632 377h1v23h-1zM633 377h1v23h-1zM634 377h1v19h-1zM635 377h1v19h-1zM636 377h1v19h-1zM637 377h1v19h-1zM638 377h1v19h-1zM639 373h1v23h-1zM640 377h1v19h-1zM641 380h1v13h-1zM642 380h1v16h-1zM643 380h1v16h-1zM644 384h1v16h-1zM645 384h1v16h-1zM646 380h1v20h-1zM647 380h1v20h-1zM648 384h1v16h-1zM649 384h1v12h-1zM650 384h1v16h-1zM651 387h1v13h-1zM652 387h1v13h-1zM653 387h1v13h-1zM654 387h1v13h-1zM655 384h1v16h-1zM656 384h1v16h-1zM657 384h1v16h-1zM658 384h1v19h-1zM659 384h1v19h-1zM660 384h1v16h-1zM661 384h1v16h-1zM662 387h1v13h-1zM663 384h1v16h-1zM664 384h1v23h-1zM665 384h1v19h-1zM666 384h1v19h-1zM667 384h1v19h-1zM668 384h1v19h-1zM669 384h1v19h-1zM670 384h1v19h-1zM671 384h1v19h-1zM672 387h1v16h-1zM673 384h1v19h-1zM674 384h1v23h-1zM675 387h1v16h-1zM676 387h1v20h-1zM677 387h1v20h-1zM678 391h1v23h-1zM679 391h1v19h-1zM680 394h1v16h-1zM681 391h1v19h-1zM682 394h1v16h-1zM683 394h1v16h-1zM684 391h1v16h-1zM685 391h1v19h-1zM686 394h1v16h-1zM687 391h1v19h-1zM688 391h1v19h-1zM689 391h1v16h-1zM690 391h1v23h-1zM691 391h1v19h-1zM692 398h1v16h-1zM693 398h1v16h-1zM694 398h1v16h-1zM695 398h1v20h-1zM696 398h1v12h-1zM697 398h1v12h-1zM698 394h1v20h-1zM699 394h1v20h-1zM700 394h1v20h-1zM701 394h1v20h-1zM702 398h1v12h-1zM703 398h1v16h-1zM704 398h1v16h-1zM705 398h1v16h-1zM706 394h1v20h-1zM707 398h1v16h-1zM708 394h1v20h-1zM709 394h1v20h-1zM710 387h1v31h-1zM711 398h1v20h-1zM712 398h1v16h-1zM713 391h1v30h-1zM714 398h1v16h-1zM715 394h1v20h-1zM716 394h1v24h-1zM717 398h1v16h-1zM718 398h1v20h-1zM719 402h1v16h-1zM720 402h1v16h-1zM721 394h1v27h-1zM722 402h1v16h-1zM723 398h1v20h-1zM724 387h1v27h-1zM725 398h1v20h-1zM726 398h1v23h-1zM727 398h1v23h-1zM728 402h1v19h-1zM729 405h1v13h-1zM730 405h1v13h-1zM731 398h1v20h-1zM732 398h1v20h-1zM733 402h1v16h-1zM734 402h1v16h-1zM735 402h1v23h-1zM736 405h1v23h-1zM737 409h1v12h-1zM738 409h1v16h-1zM739 409h1v16h-1zM740 412h1v13h-1zM741 409h1v16h-1zM742 412h1v13h-1zM743 412h1v13h-1zM744 412h1v16h-1zM745 416h1v12h-1zM746 416h1v19h-1zM747 412h1v34h-1zM748 412h1v23h-1zM749 416h1v16h-1zM750 416h1v16h-1zM751 416h1v16h-1zM752 416h1v19h-1zM753 416h1v23h-1zM754 416h1v23h-1zM755 419h1v20h-1zM756 419h1v20h-1zM757 419h1v20h-1zM758 419h1v16h-1zM759 416h1v19h-1zM760 423h1v12h-1zM761 423h1v26h-1zM762 426h1v13h-1zM763 426h1v16h-1zM764 426h1v13h-1zM765 426h1v16h-1zM766 426h1v13h-1zM767 423h1v16h-1zM768 423h1v19h-1zM769 426h1v16h-1zM770 426h1v16h-1zM771 423h1v19h-1zM772 430h1v19h-1zM773 430h1v16h-1zM774 426h1v20h-1zM775 430h1v23h-1zM776 434h1v12h-1zM777 434h1v12h-1zM778 434h1v12h-1zM779 434h1v15h-1zM780 430h1v19h-1zM781 430h1v27h-1zM782 434h1v15h-1zM783 434h1v19h-1zM784 437h1v16h-1zM785 437h1v27h-1zM786 441h1v19h-1zM787 441h1v16h-1zM788 441h1v19h-1zM789 444h1v16h-1zM790 444h1v16h-1zM791 441h1v23h-1zM792 444h1v16h-1zM793 448h1v12h-1zM794 444h1v20h-1zM795 451h1v13h-1zM796 451h1v13h-1zM797 451h1v16h-1zM798 451h1v16h-1zM799 444h1v30h-1zM800 455h1v19h-1zM801 455h1v19h-1zM802 455h1v23h-1zM803 458h1v20h-1zM804 455h1v23h-1zM805 462h1v16h-1zM806 462h1v16h-1zM807 458h1v23h-1zM808 465h1v16h-1zM809 465h1v16h-1zM810 462h1v16h-1zM811 465h1v16h-1zM812 465h1v16h-1zM813 469h1v12h-1zM814 465h1v20h-1zM815 473h1v12h-1zM816 473h1v19h-1zM817 469h1v20h-1zM818 476h1v13h-1zM819 476h1v16h-1zM820 476h1v20h-1zM821 473h1v19h-1zM822 476h1v20h-1zM823 480h1v16h-1zM824 480h1v16h-1zM825 480h1v19h-1zM826 476h1v23h-1zM827 487h1v19h-1zM828 487h1v19h-1zM829 494h1v19h-1zM830 497h1v16h-1zM831 501h1v12h-1zM832 497h1v20h-1zM833 501h1v19h-1zM834 505h1v19h-1zM835 501h1v23h-1zM836 505h1v23h-1zM837 508h1v20h-1zM838 508h1v23h-1zM839 515h1v16h-1zM840 515h1v20h-1zM841 515h1v16h-1zM842 515h1v20h-1zM843 519h1v16h-1zM844 522h1v16h-1zM845 522h1v23h-1zM846 529h1v13h-1zM847 529h1v16h-1zM848 529h1v16h-1zM849 529h1v20h-1zM850 533h1v19h-1zM851 536h1v16h-1zM852 540h1v16h-1zM853 540h1v16h-1zM854 540h1v23h-1zM855 544h1v16h-1zM856 544h1v19h-1zM857 547h1v16h-1zM858 551h1v16h-1zM859 554h1v16h-1zM860 554h1v16h-1zM861 551h1v23h-1zM862 554h1v23h-1zM863 558h1v16h-1zM864 558h1v19h-1zM865 558h1v19h-1zM866 558h1v19h-1zM867 551h1v30h-1zM868 561h1v23h-1zM869 565h1v16h-1zM870 558h1v26h-1zM871 568h1v20h-1zM872 572h1v12h-1zM873 572h1v19h-1zM874 576h1v15h-1zM875 576h1v15h-1zM876 576h1v19h-1zM877 576h1v30h-1zM878 579h1v20h-1zM879 579h1v27h-1zM880 583h1v19h-1zM881 586h1v20h-1zM882 590h1v23h-1zM883 593h1v13h-1zM884 590h1v19h-1zM885 593h1v16h-1zM886 597h1v16h-1zM887 600h1v13h-1zM888 597h1v19h-1zM889 604h1v12h-1zM890 604h1v19h-1zM891 604h1v19h-1zM892 607h1v20h-1zM893 611h1v20h-1zM894 607h1v24h-1zM895 611h1v23h-1zM896 615h1v19h-1zM897 615h1v23h-1zM898 622h1v16h-1zM899 622h1v16h-1zM900 625h1v16h-1zM901 625h1v20h-1zM902 625h1v23h-1zM903 629h1v16h-1zM904 632h1v20h-1zM905 636h1v12h-1zM906 632h1v23h-1zM907 639h1v20h-1zM908 643h1v16h-1zM909 643h1v19h-1zM910 643h1v19h-1zM911 643h1v23h-1zM912 647h1v15h-1zM913 647h1v19h-1zM914 650h1v16h-1zM915 647h1v19h-1zM916 650h1v20h-1zM917 657h1v16h-1zM918 650h1v27h-1zM919 661h1v16h-1zM920 661h1v16h-1zM921 664h1v13h-1zM922 661h1v16h-1zM923 661h1v19h-1zM924 664h1v20h-1zM925 664h1v20h-1zM926 664h1v20h-1zM927 668h1v16h-1zM928 668h1v16h-1zM929 668h1v26h-1zM930 671h1v20h-1zM931 668h1v26h-1zM932 671h1v20h-1zM933 678h1v13h-1zM934 678h1v16h-1zM935 671h1v23h-1zM936 678h1v16h-1zM937 678h1v20h-1zM938 686h1v12h-1zM939 686h1v19h-1zM940 686h1v16h-1zM941 686h1v23h-1zM942 689h1v23h-1zM943 693h1v19h-1zM944 696h1v16h-1zM945 696h1v20h-1zM946 700h1v16h-1zM947 703h1v16h-1zM948 703h1v16h-1zM949 707h1v12h-1zM950 707h1v16h-1zM951 710h1v13h-1zM952 707h1v19h-1zM953 714h1v12h-1zM954 714h1v12h-1zM955 714h1v16h-1zM956 718h1v12h-1zM957 718h1v15h-1zM958 718h1v15h-1zM959 721h1v16h-1zM960 725h1v12h-1zM961 725h1v12h-1zM962 725h1v19h-1zM963 728h1v13h-1zM964 728h1v16h-1zM965 732h1v16h-1zM966 728h1v20h-1zM967 728h1v23h-1zM968 732h1v23h-1zM969 732h1v19h-1zM970 732h1v26h-1zM971 735h1v20h-1zM972 735h1v20h-1zM973 739h1v19h-1zM974 742h1v16h-1zM975 742h1v16h-1zM976 742h1v20h-1zM977 739h1v23h-1zM978 746h1v16h-1zM979 746h1v16h-1zM980 746h1v16h-1zM981 746h1v16h-1zM982 746h1v19h-1zM983 746h1v12h-1zM984 746h1v12h-1zM985 746h1v12h-1zM986 728h1v34h-1zM987 746h1v19h-1zM988 749h1v16h-1zM989 749h1v16h-1zM990 749h1v16h-1zM991 749h1v16h-1zM992 749h1v16h-1zM993 749h1v16h-1zM994 749h1v16h-1zM995 749h1v16h-1zM996 753h1v16h-1zM997 753h1v16h-1zM998 753h1v27h-1zM999 753h1v16h-1zM1000 753h1v16h-1zM1001 753h1v16h-1zM1002 746h1v19h-1zM1003 753h1v16h-1zM1004 753h1v20h-1zM1005 753h1v20h-1zM1006 753h1v20h-1zM1007 753h1v20h-1zM1008 753h1v16h-1zM1009 753h1v27h-1zM1010 753h1v20h-1zM1011 757h1v16h-1zM1012 757h1v19h-1zM1013 757h1v19h-1zM1014 757h1v19h-1zM1015 746h1v37h-1zM1016 757h1v19h-1zM1017 753h1v23h-1zM1018 753h1v20h-1zM1019 757h1v19h-1zM1020 757h1v19h-1zM1021 757h1v23h-1zM1022 749h1v31h-1zM1023 760h1v20h-1zM1024 760h1v23h-1zM1025 760h1v20h-1zM1026 749h1v31h-1zM1027 760h1v20h-1zM1028 760h1v20h-1zM1029 764h1v16h-1zM1030 764h1v26h-1zM1031 764h1v16h-1zM1032 764h1v16h-1zM1033 760h1v20h-1zM1034 764h1v23h-1zM1035 764h1v16h-1zM1036 764h1v16h-1zM1037 764h1v16h-1zM1038 760h1v20h-1zM1039 753h1v27h-1zM1040 764h1v16h-1zM1041 764h1v12h-1zM1042 760h1v16h-1zM1043 760h1v20h-1zM1044 760h1v20h-1zM1045 753h1v30h-1zM1046 764h1v19h-1zM1047 764h1v23h-1zM1048 764h1v19h-1zM1049 764h1v19h-1zM1050 764h1v19h-1zM1051 767h1v20h-1zM1052 767h1v16h-1zM1053 767h1v16h-1zM1054 767h1v16h-1zM1055 767h1v16h-1zM1056 760h1v23h-1zM1057 764h1v19h-1zM1058 764h1v19h-1zM1059 767h1v13h-1zM1060 764h1v16h-1zM1061 764h1v16h-1zM1062 764h1v19h-1zM1063 767h1v13h-1zM1064 764h1v19h-1zM1065 764h1v19h-1zM1066 764h1v19h-1zM1067 764h1v16h-1zM1068 764h1v16h-1zM1069 764h1v16h-1zM1070 764h1v16h-1zM1071 757h1v23h-1zM1072 764h1v19h-1zM1073 764h1v19h-1zM1074 767h1v16h-1zM1075 764h1v23h-1zM1076 767h1v16h-1zM1077 764h1v19h-1zM1078 760h1v20h-1zM1079 767h1v13h-1zM1080 764h1v16h-1zM1081 767h1v20h-1zM1082 767h1v13h-1zM1083 760h1v20h-1zM1084 767h1v20h-1zM1085 764h1v23h-1zM1086 764h1v16h-1zM1087 764h1v19h-1zM1088 764h1v19h-1zM1089 764h1v19h-1zM1090 764h1v19h-1zM1091 753h1v30h-1zM1092 764h1v23h-1zM1093 764h1v16h-1zM1094 760h1v20h-1zM1095 764h1v16h-1zM1096 764h1v16h-1zM1097 764h1v19h-1zM1098 764h1v19h-1zM1099 764h1v23h-1zM1100 764h1v19h-1zM1101 767h1v16h-1zM1102 764h1v19h-1zM1103 767h1v16h-1zM1104 767h1v23h-1zM1105 760h1v34h-1zM1106 760h1v23h-1zM1107 764h1v33h-1zM1108 757h1v26h-1zM1109 764h1v19h-1zM1110 764h1v23h-1zM1111 757h1v26h-1zM1112 764h1v19h-1zM1113 764h1v19h-1zM1114 764h1v19h-1zM1115 767h1v16h-1zM1116 760h1v27h-1zM1117 764h1v19h-1zM1118 767h1v16h-1zM1119 767h1v16h-1zM1120 767h1v16h-1zM1121 767h1v16h-1zM1122 764h1v19h-1zM1123 764h1v19h-1zM1124 764h1v19h-1zM1125 764h1v19h-1zM1126 764h1v30h-1zM1127 764h1v19h-1zM1128 764h1v19h-1zM1129 767h1v16h-1zM1130 767h1v13h-1zM1131 767h1v16h-1zM1132 764h1v19h-1zM1133 764h1v19h-1zM1134 764h1v19h-1zM1135 764h1v19h-1zM1136 764h1v23h-1zM1137 767h1v23h-1zM1138 764h1v19h-1zM1139 767h1v13h-1zM1140 764h1v16h-1zM1141 764h1v19h-1zM1142 764h1v16h-1zM1143 760h1v20h-1zM1144 764h1v19h-1zM1145 760h1v27h-1zM1146 764h1v19h-1zM1147 757h1v26h-1zM1148 764h1v16h-1zM1149 764h1v16h-1zM1150 767h1v16h-1zM1151 764h1v19h-1zM1152 757h1v26h-1zM1153 764h1v19h-1zM1154 764h1v19h-1zM1155 764h1v19h-1zM1156 764h1v19h-1zM1157 767h1v16h-1zM1158 764h1v19h-1zM1159 757h1v26h-1zM1160 764h1v19h-1zM1161 764h1v19h-1zM1162 764h1v19h-1zM1163 760h1v23h-1zM1164 764h1v19h-1zM1165 764h1v19h-1zM1166 767h1v16h-1zM1167 767h1v16h-1zM1168 757h1v30h-1zM1169 764h1v16h-1zM1170 764h1v16h-1zM1171 764h1v16h-1zM1172 767h1v13h-1zM1173 767h1v13h-1zM1174 767h1v13h-1zM1175 767h1v16h-1zM1176 760h1v23h-1zM1177 764h1v19h-1zM1178 767h1v16h-1zM1179 767h1v16h-1zM1180 764h1v16h-1zM1181 767h1v13h-1zM1182 764h1v16h-1zM1183 764h1v23h-1zM1184 764h1v16h-1zM1185 764h1v16h-1zM1186 764h1v23h-1zM1187 757h1v33h-1zM1188 767h1v16h-1zM1189 767h1v13h-1zM1190 767h1v16h-1zM1191 767h1v30h-1zM1192 764h1v23h-1zM1193 760h1v20h-1zM1194 760h1v23h-1zM1195 764h1v19h-1zM1196 760h1v23h-1zM1197 764h1v16h-1zM1198 764h1v16h-1zM1199 764h1v16h-1zM1200 764h1v16h-1zM1201 764h1v16h-1zM1202 764h1v16h-1zM1203 760h1v20h-1zM1204 760h1v20h-1zM1205 764h1v23h-1zM1206 767h1v13h-1zM1207 764h1v16h-1zM1208 764h1v19h-1zM1209 764h1v23h-1zM1210 760h1v20h-1zM1211 764h1v26h-1zM1212 764h1v16h-1zM1213 767h1v13h-1zM1214 764h1v19h-1zM1215 767h1v16h-1zM1216 764h1v19h-1zM1217 760h1v23h-1zM1218 764h1v23h-1zM1219 764h1v23h-1zM1220 760h1v30h-1zM1221 764h1v26h-1zM1222 764h1v19h-1zM1223 760h1v20h-1zM1224 764h1v19h-1zM1225 767h1v13h-1zM1226 767h1v16h-1zM1227 760h1v23h-1zM1228 764h1v19h-1zM1229 764h1v19h-1zM1230 764h1v19h-1zM1231 767h1v16h-1zM1232 767h1v20h-1zM1233 767h1v16h-1zM1234 764h1v19h-1zM1235 764h1v23h-1zM1236 767h1v16h-1zM1237 767h1v16h-1zM1238 767h1v13h-1zM1239 767h1v13h-1zM1240 767h1v13h-1zM1241 767h1v13h-1zM1242 767h1v13h-1zM1243 764h1v16h-1zM1244 764h1v16h-1zM1245 767h1v20h-1zM1246 767h1v16h-1zM1247 764h1v23h-1zM1248 767h1v16h-1zM1249 767h1v20h-1zM1250 767h1v13h-1zM1251 760h1v20h-1zM1252 764h1v16h-1zM1253 764h1v16h-1zM1254 764h1v19h-1zM1255 767h1v13h-1zM1256 767h1v13h-1zM1257 767h1v16h-1zM1258 760h1v30h-1zM1259 767h1v13h-1zM1260 757h1v33h-1zM1261 764h1v16h-1zM1262 764h1v19h-1zM1263 760h1v23h-1zM1264 764h1v19h-1zM1265 764h1v16h-1zM1266 764h1v19h-1zM1267 764h1v16h-1zM1268 764h1v19h-1zM1269 767h1v13h-1zM1270 767h1v13h-1zM1271 764h1v16h-1zM1272 764h1v16h-1zM1273 764h1v16h-1zM1274 767h1v13h-1zM1275 767h1v13h-1zM1276 764h1v16h-1zM1277 767h1v13h-1zM1278 767h1v16h-1zM1279 767h1v16h-1zM1280 767h1v16h-1zM1281 767h1v20h-1zM1282 767h1v13h-1zM1283 760h1v27h-1zM1284 764h1v16h-1zM1285 764h1v19h-1zM1286 764h1v16h-1zM1287 757h1v23h-1zM1288 760h1v20h-1zM1289 767h1v16h-1zM1290 760h1v37h-1zM1291 767h1v16h-1zM1292 764h1v16h-1zM1293 757h1v23h-1zM1294 764h1v19h-1zM1295 757h1v30h-1zM1296 767h1v20h-1zM1297 767h1v16h-1zM1298 764h1v19h-1zM1299 767h1v16h-1zM1300 767h1v16h-1zM1301 767h1v16h-1zM1302 767h1v16h-1zM1303 767h1v16h-1zM1304 764h1v26h-1zM1305 764h1v19h-1zM1306 764h1v26h-1zM1307 764h1v19h-1zM1308 764h1v19h-1zM1309 764h1v19h-1zM1310 767h1v16h-1zM1311 767h1v13h-1zM1312 767h1v13h-1zM1313 764h1v16h-1zM1314 764h1v16h-1zM1315 764h1v19h-1zM1316 764h1v16h-1zM1317 749h1v34h-1zM1318 764h1v19h-1zM1319 767h1v20h-1zM1320 764h1v19h-1zM1321 753h1v27h-1zM1322 767h1v16h-1zM1323 767h1v16h-1zM1324 767h1v13h-1zM1325 753h1v30h-1zM1326 760h1v23h-1zM1327 764h1v19h-1zM1328 764h1v16h-1zM1329 764h1v19h-1zM1330 764h1v19h-1zM1331 767h1v16h-1zM1332 764h1v19h-1zM1333 767h1v16h-1zM1334 767h1v16h-1zM1335 767h1v16h-1zM1336 767h1v16h-1zM1337 760h1v20h-1zM1338 767h1v13h-1zM1339 767h1v13h-1zM1340 764h1v23h-1zM1341 764h1v19h-1zM1342 767h1v16h-1zM1343 767h1v16h-1zM1344 767h1v16h-1zM1345 767h1v16h-1zM1346 767h1v16h-1zM1347 767h1v16h-1zM1348 764h1v19h-1zM1349 767h1v20h-1zM1350 767h1v30h-1zM1351 764h1v23h-1zM1352 760h1v23h-1zM1353 764h1v19h-1zM1354 764h1v16h-1zM1355 764h1v26h-1zM1356 764h1v16h-1zM1357 767h1v16h-1zM1358 767h1v16h-1zM1359 767h1v16h-1zM1360 767h1v13h-1zM1361 764h1v16h-1zM1362 767h1v13h-1zM1363 767h1v13h-1zM1364 760h1v23h-1zM1365 764h1v19h-1zM1366 764h1v16h-1zM1367 767h1v13h-1zM1368 764h1v19h-1zM1369 767h1v20h-1zM1370 767h1v20h-1zM1371 764h1v16h-1zM1372 767h1v13h-1zM1373 767h1v20h-1zM1374 760h1v20h-1zM1375 767h1v16h-1zM1376 767h1v16h-1zM1377 767h1v16h-1zM1378 764h1v16h-1zM1379 764h1v16h-1zM1380 764h1v19h-1zM1381 764h1v19h-1zM1382 764h1v16h-1zM1383 764h1v16h-1zM1384 764h1v16h-1zM1385 757h1v23h-1zM1386 764h1v16h-1zM1387 760h1v23h-1zM1388 764h1v19h-1zM1389 764h1v19h-1zM1390 764h1v19h-1zM1391 764h1v19h-1zM1392 764h1v19h-1zM1393 764h1v19h-1zM1394 760h1v23h-1zM1395 764h1v19h-1zM1396 764h1v19h-1zM1397 757h1v26h-1zM1398 764h1v33h-1zM1399 760h1v23h-1zM1400 749h1v34h-1zM1401 764h1v19h-1zM1402 767h1v13h-1zM1403 767h1v13h-1zM1404 767h1v13h-1zM1405 767h1v20h-1zM1406 764h1v30h-1zM1407 757h1v26h-1zM1408 767h1v16h-1zM1409 764h1v23h-1zM1410 760h1v23h-1zM1411 767h1v16h-1zM1412 764h1v16h-1zM1413 760h1v23h-1zM1414 764h1v16h-1zM1415 764h1v16h-1zM1416 764h1v16h-1zM1417 767h1v16h-1zM1418 767h1v16h-1zM1419 760h1v23h-1zM1420 764h1v19h-1zM1421 767h1v27h-1zM1422 767h1v23h-1zM1423 767h1v23h-1zM1424 764h1v23h-1zM1425 764h1v16h-1zM1426 764h1v16h-1zM1427 764h1v30h-1zM1428 764h1v16h-1zM1429 764h1v16h-1zM1430 764h1v16h-1zM1431 764h1v16h-1zM1432 764h1v16h-1zM1433 764h1v19h-1zM1434 764h1v16h-1zM1435 764h1v16h-1zM1436 767h1v13h-1zM1437 767h1v16h-1zM1438 760h1v20h-1zM1439 764h1v16h-1zM1440 760h1v27h-1zM1441 764h1v16h-1zM1442 764h1v19h-1zM1443 757h1v26h-1zM1444 764h1v19h-1zM1445 767h1v16h-1zM1446 767h1v16h-1zM1447 767h1v16h-1zM1448 767h1v20h-1zM1449 767h1v16h-1zM1450 764h1v19h-1zM1451 760h1v30h-1zM1452 764h1v23h-1zM1453 764h1v19h-1zM1454 764h1v16h-1zM1455 764h1v26h-1zM1456 764h1v19h-1zM1457 760h1v23h-1zM1458 767h1v16h-1zM1459 767h1v16h-1zM1460 767h1v16h-1zM1461 767h1v16h-1zM1462 767h1v16h-1zM1463 764h1v23h-1zM1464 764h1v16h-1zM1465 767h1v16h-1zM1466 767h1v13h-1zM1467 764h1v16h-1zM1468 764h1v16h-1zM1469 764h1v16h-1zM1470 767h1v16h-1zM1471 764h1v19h-1zM1472 764h1v23h-1zM1473 767h1v13h-1zM1474 767h1v13h-1zM1475 767h1v13h-1zM1476 767h1v13h-1zM1477 767h1v23h-1zM1478 753h1v30h-1zM1479 764h1v19h-1zM1480 764h1v19h-1zM1481 760h1v23h-1zM1482 760h1v23h-1zM1483 764h1v19h-1zM1484 764h1v19h-1zM1485 757h1v26h-1zM1486 764h1v23h-1zM1487 760h1v23h-1zM1488 760h1v23h-1zM1489 764h1v26h-1zM1490 764h1v19h-1zM1491 757h1v26h-1zM1492 764h1v19h-1zM1493 764h1v19h-1zM1494 757h1v26h-1zM1495 760h1v37h-1zM1496 764h1v23h-1zM1497 760h1v23h-1zM1498 764h1v16h-1zM1499 764h1v16h-1zM1500 764h1v19h-1zM1501 760h1v20h-1zM1502 764h1v16h-1zM1503 764h1v16h-1zM1504 764h1v16h-1zM1505 764h1v19h-1zM1506 764h1v16h-1zM1507 764h1v16h-1zM1508 760h1v23h-1zM1509 764h1v19h-1zM1510 764h1v16h-1zM1511 764h1v16h-1zM1512 760h1v20h-1zM1513 760h1v20h-1zM1514 767h1v13h-1zM1515 767h1v16h-1zM1516 767h1v13h-1zM1517 764h1v19h-1zM1518 764h1v16h-1zM1519 767h1v13h-1zM1520 760h1v23h-1zM1521 753h1v30h-1zM1522 767h1v16h-1zM1523 767h1v16h-1zM1524 767h1v16h-1zM1525 767h1v13h-1zM1526 767h1v16h-1zM1527 767h1v16h-1zM1528 767h1v23h-1zM1529 767h1v16h-1zM1530 764h1v19h-1zM1531 767h1v20h-1zM1532 764h1v19h-1zM1533 764h1v19h-1zM1534 760h1v23h-1zM1535 764h1v19h-1zM1536 764h1v19h-1zM1537 757h1v26h-1zM1538 767h1v13h-1zM1539 767h1v27h-1zM1540 764h1v19h-1zM1541 760h1v23h-1zM1542 760h1v20h-1zM1543 764h1v16h-1zM1544 764h1v16h-1zM1545 764h1v16h-1zM1546 764h1v16h-1zM1547 764h1v16h-1zM1548 767h1v13h-1zM1549 767h1v13h-1zM1550 767h1v13h-1zM1551 764h1v16h-1zM1552 764h1v19h-1zM1553 764h1v26h-1zM1554 764h1v19h-1zM1555 767h1v20h-1zM1556 764h1v19h-1zM1557 764h1v19h-1zM1558 764h1v23h-1zM1559 764h1v23h-1zM1560 764h1v16h-1zM1561 764h1v16h-1zM1562 760h1v20h-1zM1563 764h1v19h-1zM1564 764h1v16h-1zM1565 764h1v16h-1zM1566 764h1v19h-1zM1567 764h1v23h-1zM1568 767h1v16h-1zM1569 767h1v20h-1zM1570 760h1v23h-1zM1571 767h1v23h-1zM1572 767h1v16h-1zM1573 767h1v20h-1zM1574 764h1v23h-1zM1575 764h1v16h-1zM1576 764h1v30h-1zM1577 764h1v16h-1zM1578 757h1v23h-1zM1579 764h1v16h-1zM1580 764h1v23h-1zM1581 764h1v16h-1zM1582 764h1v19h-1zM1583 760h1v23h-1zM1584 767h1v16h-1zM1585 760h1v27h-1zM1586 764h1v19h-1zM1587 760h1v20h-1zM1588 757h1v23h-1zM1589 764h1v16h-1zM1590 767h1v16h-1zM1591 767h1v13h-1zM1592 767h1v13h-1zM1593 767h1v27h-1zM1594 767h1v16h-1zM1595 767h1v16h-1zM1596 764h1v19h-1zM1597 757h1v26h-1zM1598 764h1v19h-1zM1599 767h1v16h-1zM1600 764h1v23h-1zM1601 764h1v19h-1zM1602 764h1v19h-1zM1603 764h1v19h-1zM1604 767h1v16h-1zM1605 764h1v23h-1zM1606 764h1v23h-1z"/>
<rect x="680" y="174" width="1" height="796" fill="#00c8ff"/>
<path fill="#00c8ff" d="M968 174h1v3h-1zM968 180h1v3h-1zM968 186h1v3h-1zM968 192h1v3h-1zM968 198h1v3h-1zM968 204h1v3h-1zM968 210h1v3h-1zM968 216h1v3h-1zM968 222h1v3h-1zM968 228h1v3h-1zM968 234h1v3h-1zM968 240h1v3h-1zM968 246h1v3h-1zM968 252h1v3h-1zM968 258h1v3h-1zM968 264h1v3h-1zM968 270h1v3h-1zM968 276h1v3h-1zM968 282h1v3h-1zM968 288h1v3h-1zM968 294h1v3h-1zM968 300h1v3h-1zM968 306h1v3h-1zM968 312h1v3h-1zM968 318h1v3h-1zM968 324h1v3h-1zM968 330h1v3h-1zM968 336h1v3h-1zM968 342h1v3h-1zM968 348h1v3h-1zM968 354h1v3h-1zM968 360h1v3h-1zM968 366h1v3h-1zM968 372h1v3h-1zM968 378h1v3h-1zM968 384h1v3h-1zM968 390h1v3h-1zM968 396h1v3h-1zM968 402h1v3h-1zM968 408h1v3h-1zM968 414h1v3h-1zM968 420h1v3h-1zM968 426h1v3h-1zM968 432h1v3h-1zM968 438h1v3h-1zM968 444h1v3h-1zM968 450h1v3h-1zM968 456h1v3h-1zM968 462h1v3h-1zM968 468h1v3h-1zM968 474h1v3h-1zM968 480h1v3h-1zM968 486h1v3h-1zM968 492h1v3h-1zM968 498h1v3h-1zM968 504h1v3h-1zM968 510h1v3h-1zM968 516h1v3h-1zM968 522h1v3h-1zM968 528h1v3h-1zM968 534h1v3h-1zM968 540h1v3h-1zM968 546h1v3h-1zM968 552h1v3h-1zM968 558h1v3h-1zM968 564h1v3h-1zM968 570h1v3h-1zM968 576h1v3h-1zM968 582h1v3h-1zM968 588h1v3h-1zM968 594h1v3h-1zM968 600h1v3h-1zM968 606h1v3h-1zM968 612h1v3h-1zM968 618h1v3h-1zM968 624h1v3h-1zM968 630h1v3h-1zM968 636h1v3h-1zM968 642h1v3h-1zM968 648h1v3h-1zM968 654h1v3h-1zM968 660h1v3h-1zM968 666h1v3h-1zM968 672h1v3h-1zM968 678h1v3h-1zM968 684h1v3h-1zM968 690h1v3h-1zM968 696h1v3h-1zM968 702h1v3h-1zM968 708h1v3h-1zM968 714h1v3h-1zM968 720h1v3h-1zM968 726h1v3h-1zM968 732h1v3h-1zM968 738h1v3h-1zM968 744h1v3h-1zM968 750h1v3h-1zM968 756h1v3h-1zM968 762h1v3h-1zM968 768h1v3h-1zM968 774h1v3h-1zM968 780h1v3h-1zM968 786h1v3h-1zM968 792h1v3h-1zM968 798h1v3h-1zM968 804h1v3h-1zM968 810h1v3h-1zM968 816h1v3h-1zM968 822h1v3h-1zM968 828h1v3h-1zM968 834h1v3h-1zM968 840h1v3h-1zM968 846h1v3h-1zM968 852h1v3h-1zM968 858h1v3h-1zM968 864h1v3h-1zM968 870h1v3h-1zM968 876h1v3h-1zM968 882h1v3h-1zM968 888h1v3h-1zM968 894h1v3h-1zM968 900h1v3h-1zM968 906h1v3h-1zM968 912h1v3h-1zM968 918h1v3h-1zM968 924h1v3h-1zM968 930h1v3h-1zM968 936h1v3h-1zM968 942h1v3h-1zM968 948h1v3h-1zM968 954h1v3h-1zM968 960h1v3h-1zM968 966h1v3h-1z"/>
</svg>
<!-- channel boxes -->
<div class="blk" style="left:27px;top:976px;width:92px;height:19px"></div>
<div class="blk" style="left:167px;top:976px;width:92px;height:19px"></div>
<div class="blk" style="left:1395px;top:976px;width:213px;height:19px"></div>
<svg class="a" style="left:0;top:980px" width="260" height="12" viewBox="0 980 260 12" shape-rendering="crispEdges">
<path d="M57 988h11v1.3h-11z" fill="#ff0"/><path d="M57 984.5h2v1h-2zM61.5 984.5h2v1h-2zM66 984.5h2v1h-2z" fill="#ff0"/>
<path d="M197 988h11v1.3h-11z" fill="#0f0"/><path d="M197 984.5h2v1h-2zM201.5 984.5h2v1h-2zM206 984.5h2v1h-2z" fill="#0f0"/>
</svg>
<!-- markers -->
<svg class="a" style="left:7px;top:762px" width="20" height="16"><path d="M1 1H13L18 6.5L13 15H1Z" fill="#0f0"/><path d="M1 12H16L13 15H1Z" fill="#ff0"/><text x="5" y="12" font-size="11" font-family="Liberation Sans" font-weight="bold">2</text></svg>
<svg class="a" style="left:1610px;top:668px" width="19" height="13"><path d="M1 6.5L6 1H18V12H6Z" fill="#ff0"/><text x="8" y="11" font-size="11" font-family="Liberation Sans">T</text></svg>

<!-- control panel -->
<div class="a cp"></div>
<div class="a" style="left:1634px;top:92px;width:1px;height:911px;background:#a0a0a0"></div>
<div class="a" style="left:1635px;top:92px;width:4px;height:911px;background:#eef1fa"></div>
<div class="a" style="left:1639px;top:92px;width:281px;height:29px;background:linear-gradient(#c3d1e1,#e3ebf5)"></div>
<svg class="a" style="left:1884px;top:99px" width="12" height="14"><path d="M3 1.5h6M4 1.5v7h4v-7M2 8.5h8M6 8.5v5" stroke="#222" stroke-width="1.6" fill="none"/></svg>
<svg class="a" style="left:1902px;top:100px" width="13" height="13"><path d="M1.5 1.5L11.5 11.5M11.5 1.5L1.5 11.5" stroke="#222" stroke-width="2.2"/></svg>
<div class="dd" style="left:1639px;top:121px;width:281px;height:28px;font-size:15px"><i style="right:10px;top:8px;border-color:#666"></i></div>
<div class="a" style="left:1639px;top:149px;width:281px;height:24px;background:linear-gradient(#f3f5fb 0%,#f2f5fb 30%,#dcdfea 55%,#c6c9da 75%,#b4b8cc 100%)"></div>
<div class="a" style="left:1899px;top:173px;width:1px;height:830px;background:#fff"></div>
<div class="a" style="left:1900px;top:194px;width:19px;height:723px;background:#cdcdcd"></div>
<svg class="a" style="left:1903px;top:179px" width="13" height="9"><path d="M1.5 7.5L6.5 2.5L11.5 7.5" stroke="#606060" stroke-width="1.8" fill="none"/></svg>
<svg class="a" style="left:1903px;top:988px" width="13" height="9"><path d="M1.5 1.5L6.5 6.5L11.5 1.5" stroke="#606060" stroke-width="1.8" fill="none"/></svg>
<div class="grp" style="left:1644px;top:187px;width:236px;height:135px"><b style="left:86px;width:64px"></b></div>

<div class="dd" style="left:1655px;top:223px;width:86px;height:24px"><i></i></div>

<div class="dd" style="left:1655px;top:283px;width:86px;height:24px"><i></i></div>
<svg class="a" style="left:1765px;top:214px" width="80" height="80" viewBox="1765 214 80 80">
<circle cx="1805" cy="254" r="36.5" fill="#fff" stroke="#000" stroke-width="1"/>
<circle cx="1805" cy="254" r="33.5" fill="#d0d0d0" stroke="#000" stroke-width="1"/>
<path d="M1826.5 232.5A30.5 30.5 0 0 1 1783.5 275.5" stroke="#b4b4b4" stroke-width="6" fill="none"/>
<circle cx="1805" cy="254" r="28" fill="#0000cc" stroke="#000" stroke-width="1"/>
<path d="M1782 278L1774 286M1828 278L1836 286" stroke="#000" stroke-width="1.3"/>
<path d="M1804.2 250.1L1800.4 232.5" stroke="#ffffc0" stroke-width="2"/>
</svg>
<div class="grp" style="left:1644px;top:343px;width:236px;height:325px"><b style="left:94px;width:49px"></b></div>
<div class="cb on" style="left:1655px;top:362px"></div>

<div class="dd" style="left:1655px;top:387px;width:86px;height:24px"><i></i></div>
<div class="dd dis" style="left:1655px;top:427px;width:86px;height:24px"><i></i></div>
<div class="dd" style="left:1655px;top:467px;width:86px;height:24px"><i></i></div>
<svg class="a" style="left:1765px;top:369px" width="80" height="80" viewBox="1765 369 80 80">
<circle cx="1805" cy="409" r="36.5" fill="#fff" stroke="#000" stroke-width="1"/>
<circle cx="1805" cy="409" r="33.5" fill="#d0d0d0" stroke="#000" stroke-width="1"/>
<path d="M1826.5 387.5A30.5 30.5 0 0 1 1783.5 430.5" stroke="#b4b4b4" stroke-width="6" fill="none"/>
<circle cx="1805" cy="409" r="28" fill="#ffff00" stroke="#000" stroke-width="1"/>
<path d="M1782 433L1774 441M1828 433L1836 441" stroke="#000" stroke-width="1.3"/>
<path d="M1808.6 407.3L1824.9 399.7" stroke="#e0e0a0" stroke-width="2"/>
</svg>
<div class="cb" style="left:1784px;top:474px"></div>

<div class="cb on" style="left:1655px;top:522px"></div>

<div class="dd" style="left:1655px;top:547px;width:86px;height:24px"><i></i></div>
<div class="dd dis" style="left:1655px;top:587px;width:86px;height:24px"><i></i></div>
<div class="dd" style="left:1655px;top:627px;width:86px;height:24px"><i></i></div>
<svg class="a" style="left:1765px;top:530px" width="80" height="80" viewBox="1765 530 80 80">
<circle cx="1805" cy="570" r="36.5" fill="#fff" stroke="#000" stroke-width="1"/>
<circle cx="1805" cy="570" r="33.5" fill="#d0d0d0" stroke="#000" stroke-width="1"/>
<path d="M1826.5 548.5A30.5 30.5 0 0 1 1783.5 591.5" stroke="#b4b4b4" stroke-width="6" fill="none"/>
<circle cx="1805" cy="570" r="28" fill="#00e600" stroke="#000" stroke-width="1"/>
<path d="M1782 594L1774 602M1828 594L1836 602" stroke="#000" stroke-width="1.3"/>
<path d="M1806.7 566.4L1814.3 550.1" stroke="#d0f0d0" stroke-width="2"/>
</svg>
<div class="cb on" style="left:1784px;top:634px"></div>

<div class="grp" style="left:1644px;top:690px;width:236px;height:184px"><b style="left:95px;width:47px"></b></div>

<div class="dd" style="left:1772px;top:715px;width:86px;height:24px"><i></i></div>

<div class="dd" style="left:1772px;top:755px;width:86px;height:24px"><i></i></div>

<div class="dd" style="left:1772px;top:795px;width:86px;height:24px"><i></i></div>

<div class="dd" style="left:1772px;top:835px;width:86px;height:24px"><i></i></div>

<!-- status -->
<div id="status" class="a"></div>

<!-- taskbar -->
<div id="task" class="a"></div>
<div class="a" style="left:251px;top:1030px;width:51px;height:50px;background:#8f1c1c"></div>
<div class="a" style="left:494px;top:1030px;width:61px;height:50px;background:#3b3b3b"></div>
<div class="ul" style="left:189px;width:51px;background:#76b9ed"></div>
<div class="ul" style="left:251px;width:51px;background:#ff1010"></div>
<div class="ul" style="left:313px;width:51px;background:#76b9ed"></div>
<div class="ul" style="left:375px;width:51px;background:#76b9ed"></div>
<div class="ul" style="left:437px;width:51px;background:#76b9ed"></div>
<div class="ul" style="left:494px;width:61px;background:#76b9ed"></div>
<div class="ul" style="left:561px;width:51px;background:#76b9ed"></div>
<svg class="a" style="left:0;top:1030px" width="1920" height="50" viewBox="0 1030 1920 50">
<path d="M20 1046.5L28.5 1045.3V1054H20ZM29.8 1045.1L40 1043.6V1054H29.8ZM20 1055.2H28.5V1064L20 1062.8ZM29.8 1055.2H40V1065.5L29.8 1064.1Z" fill="#fff"/>
<circle cx="93" cy="1053" r="6.8" fill="none" stroke="#fff" stroke-width="1.4"/><path d="M88 1058L80.5 1065.5" stroke="#fff" stroke-width="1.5"/>
<path d="M140.5 1048.5V1045.5H152.5V1048.5M140.5 1061.5V1064.5H152.5V1061.5M140.5 1050.5H152.5V1059.5H140.5Z" stroke="#fff" stroke-width="1.2" fill="none"/><path d="M159.5 1045V1064.5" stroke="#fff" stroke-width="1.2"/><rect x="157.5" y="1051" width="4" height="4" fill="#fff"/>
<path d="M200.5 1043H225.5L227.5 1045V1068.5H200.5Z" fill="#1e46c8"/><rect x="208" y="1043" width="14" height="8" fill="#d8d8e0"/><rect x="217" y="1044" width="3" height="6" fill="#1e46c8"/><rect x="204" y="1054" width="19.5" height="14" fill="#fbe4e8"/><path d="M204 1057.5H223.5M204 1061H223.5M204 1064.5H223.5" stroke="#e88a9a" stroke-width="1"/>
<ellipse cx="276" cy="1055" rx="13" ry="13.3" fill="#ff1b2d"/><ellipse cx="276" cy="1055" rx="5.5" ry="10" fill="#8f1c1c"/>
<rect x="323" y="1040" width="30" height="30" fill="#3a0ca8"/><path d="M324 1044L346 1065M324 1050L342 1066M330 1041L350 1060" stroke="#e8e8f8" stroke-width="1.6" fill="none"/><path d="M340 1060L347 1054L353 1062L346 1068Z" fill="#f5a623"/>
<path d="M385 1040H410L415 1045V1070H385Z" fill="#f08a24"/><circle cx="399" cy="1052" r="6.5" fill="none" stroke="#fff" stroke-width="3"/><text x="391" y="1067" font-family="Liberation Sans" font-size="6" fill="#fde0c0">PDF</text>
<circle cx="462" cy="1055" r="13" fill="none" stroke="#1e7ed8" stroke-width="3"/><path d="M457 1046V1064M458 1055L466 1047M458 1055L470 1063" stroke="#1e7ed8" stroke-width="3.2" fill="none"/>
<rect x="510" y="1042" width="27" height="22" rx="1" fill="#e0e0e0" stroke="#888"/><rect x="513" y="1045" width="21" height="15" fill="#404040"/><path d="M514 1053H519L521 1050L522 1046L523 1059L525 1053H533" stroke="#7ed23a" stroke-width="1.2" fill="none"/><rect x="520" y="1064" width="7" height="3" fill="#ccc"/><rect x="516" y="1067" width="15" height="2" fill="#ddd"/>
<ellipse cx="582" cy="1059" rx="12" ry="9" fill="#cfe4f4" stroke="#8ab0d0"/><circle cx="575" cy="1057" r="2.2" fill="#e03030"/><circle cx="580" cy="1052.5" r="2.2" fill="#40b040"/><circle cx="586" cy="1052" r="2.2" fill="#f0a020"/><circle cx="577" cy="1062" r="1.8" fill="#333"/><path d="M587 1072L597 1046" stroke="#e07a20" stroke-width="2"/><path d="M595 1050L598 1042L601 1046Z" fill="#c89050"/>
<path d="M1610 1059.5L1618 1051.5L1626 1059.5" stroke="#fff" stroke-width="1.3" fill="none"/>
<rect x="1643.5" y="1051" width="14" height="9" fill="none" stroke="#fff" stroke-width="1.3"/><rect x="1645.5" y="1053" width="10" height="5" fill="#fff"/><rect x="1657.5" y="1053.5" width="1.5" height="4" fill="#fff"/><path d="M1640 1048V1052M1643 1048V1052M1639 1052H1644" stroke="#fff" stroke-width="1"/>
<path d="M1671 1064A14 14 0 0 1 1686 1049M1674.5 1064A10.5 10.5 0 0 1 1686 1052.5M1678 1064A7 7 0 0 1 1686 1056" stroke="#fff" stroke-width="1.2" fill="none"/><circle cx="1684.5" cy="1062.5" r="1.6" fill="#fff"/>
<path d="M1698.5 1051.5H1702L1707 1047V1063L1702 1058.5H1698.5Z" stroke="#fff" stroke-width="1.2" fill="none"/><path d="M1710 1052A4 4 0 0 1 1710 1058M1713 1049A8 8 0 0 1 1713 1061" stroke="#fff" stroke-width="1.1" fill="none"/><path d="M1716 1047A11 11 0 0 1 1716 1064" stroke="#888" stroke-width="1.1" fill="none"/>
<path d="M1869.5 1046.5H1889.5V1060.5H1881L1878 1063.5L1875 1060.5H1869.5Z" stroke="#fff" stroke-width="1.3" fill="none"/>
<rect x="1915" y="1030" width="1" height="50" fill="#555"/>
</svg>
<svg class="a" style="left:0;top:0" width="1920" height="1080" font-family="Liberation Sans">
<text x="26.40" y="20.00" font-size="15.65" fill="#000" textLength="155.17" lengthAdjust="spacingAndGlyphs">Hantek6022BE Ver 1.0.6</text>
<text x="15.14" y="47.50" font-size="14.94" fill="#000" textLength="23.96" lengthAdjust="spacingAndGlyphs">File</text>
<text x="54.30" y="47.50" font-size="14.94" fill="#000" textLength="31.32" lengthAdjust="spacingAndGlyphs">View</text>
<text x="99.97" y="47.50" font-size="14.94" fill="#000" textLength="71.07" lengthAdjust="spacingAndGlyphs">Horizontal</text>
<text x="186.00" y="47.50" font-size="14.94" fill="#000" textLength="48.98" lengthAdjust="spacingAndGlyphs">Vertical</text>
<text x="250.77" y="47.50" font-size="14.94" fill="#000" textLength="46.81" lengthAdjust="spacingAndGlyphs">Trigger</text>
<text x="312.81" y="47.50" font-size="14.94" fill="#000" textLength="49.99" lengthAdjust="spacingAndGlyphs">Display</text>
<text x="377.03" y="47.50" font-size="14.94" fill="#000" textLength="43.04" lengthAdjust="spacingAndGlyphs">Cursor</text>
<text x="433.98" y="47.50" font-size="14.94" fill="#000" textLength="40.02" lengthAdjust="spacingAndGlyphs">Utility</text>
<text x="487.75" y="47.50" font-size="14.94" fill="#000" textLength="32.90" lengthAdjust="spacingAndGlyphs">Help</text>
<text x="58.78" y="113.75" font-size="16.22" fill="#000" font-weight="bold" textLength="41.56" lengthAdjust="spacingAndGlyphs">Scope</text>
<text x="18.38" y="144.60" font-size="12.23" fill="#ff0000" textLength="32.12" lengthAdjust="spacingAndGlyphs">STOP</text>
<text x="1542.92" y="145.00" font-size="12.52" fill="#000" textLength="24.57" lengthAdjust="spacingAndGlyphs">CH1</text>
<text x="1573.92" y="145.00" font-size="12.52" fill="#ffff00" textLength="39.02" lengthAdjust="spacingAndGlyphs">973mV</text>
<text x="32.13" y="966.80" font-size="16.07" fill="#ffff00" textLength="369.14" lengthAdjust="spacingAndGlyphs">Cursor : △Time = 18.2mS. △Frequency = 54.90Hz.</text>
<text x="29.18" y="989.75" font-size="12.23" fill="#ffff00" textLength="24.21" lengthAdjust="spacingAndGlyphs">CH1</text>
<text x="77.52" y="989.75" font-size="12.23" fill="#ffff00" textLength="30.32" lengthAdjust="spacingAndGlyphs">1.00V</text>
<text x="168.91" y="989.75" font-size="12.23" fill="#00ff00" textLength="25.10" lengthAdjust="spacingAndGlyphs">CH2</text>
<text x="216.69" y="989.75" font-size="12.23" fill="#00ff00" textLength="31.15" lengthAdjust="spacingAndGlyphs">2.00V</text>
<text x="1396.80" y="989.60" font-size="11.95" fill="#ff9900" textLength="82.59" lengthAdjust="spacingAndGlyphs">Time: 10.00ms</text>
<text x="1498.02" y="989.60" font-size="11.95" fill="#ff9900" textLength="109.35" lengthAdjust="spacingAndGlyphs">Sample Rate: 1MHz</text>
<text x="3.49" y="1023.75" font-size="15.29" fill="#000" textLength="64.48" lengthAdjust="spacingAndGlyphs">Running...</text>
<text x="1815.30" y="1023.75" font-size="14.94" fill="#000" textLength="76.07" lengthAdjust="spacingAndGlyphs">23-04-2020</text>
<text x="1899.35" y="1023.75" font-size="14.94" fill="#000" textLength="19.42" lengthAdjust="spacingAndGlyphs">20:</text>
<text x="1642.31" y="111.90" font-size="14.94" fill="#000" textLength="88.65" lengthAdjust="spacingAndGlyphs">Control Panel</text>
<text x="1642.54" y="140.50" font-size="14.51" fill="#000" textLength="42.06" lengthAdjust="spacingAndGlyphs">Scope</text>
<text x="1733.18" y="192.10" font-size="13.80" fill="#000" textLength="58.94" lengthAdjust="spacingAndGlyphs">Horizontal</text>
<text x="1656.90" y="213.75" font-size="13.80" fill="#000" textLength="52.64" lengthAdjust="spacingAndGlyphs">Time/DIV</text>
<text x="1659.19" y="239.60" font-size="13.80" fill="#000" textLength="49.51" lengthAdjust="spacingAndGlyphs">10.00ms</text>
<text x="1655.99" y="273.75" font-size="13.80" fill="#000" textLength="40.97" lengthAdjust="spacingAndGlyphs">Format</text>
<text x="1659.31" y="299.60" font-size="13.80" fill="#000" textLength="18.91" lengthAdjust="spacingAndGlyphs">Y-T</text>
<text x="1741.30" y="348.10" font-size="13.80" fill="#000" textLength="43.17" lengthAdjust="spacingAndGlyphs">Vertical</text>
<text x="1673.83" y="374.90" font-size="13.80" fill="#000" textLength="24.47" lengthAdjust="spacingAndGlyphs">CH1</text>
<text x="1658.99" y="403.60" font-size="13.80" fill="#000" textLength="34.05" lengthAdjust="spacingAndGlyphs">1.00V</text>
<text x="1658.47" y="443.60" font-size="13.80" fill="#838383" textLength="18.98" lengthAdjust="spacingAndGlyphs">DC</text>
<text x="1659.50" y="483.60" font-size="13.80" fill="#000" textLength="22.25" lengthAdjust="spacingAndGlyphs">x10</text>
<text x="1802.05" y="487.30" font-size="13.80" fill="#000" textLength="30.51" lengthAdjust="spacingAndGlyphs">Invert</text>
<text x="1673.81" y="534.90" font-size="13.80" fill="#000" textLength="25.20" lengthAdjust="spacingAndGlyphs">CH2</text>
<text x="1659.19" y="563.60" font-size="13.80" fill="#000" textLength="33.84" lengthAdjust="spacingAndGlyphs">2.00V</text>
<text x="1658.47" y="603.60" font-size="13.80" fill="#838383" textLength="18.98" lengthAdjust="spacingAndGlyphs">DC</text>
<text x="1659.50" y="643.60" font-size="13.80" fill="#000" textLength="22.25" lengthAdjust="spacingAndGlyphs">x10</text>
<text x="1802.05" y="647.30" font-size="13.80" fill="#000" textLength="30.51" lengthAdjust="spacingAndGlyphs">Invert</text>
<text x="1742.40" y="694.60" font-size="13.80" fill="#000" textLength="40.06" lengthAdjust="spacingAndGlyphs">Trigger</text>
<text x="1659.90" y="731.60" font-size="13.80" fill="#000" textLength="75.21" lengthAdjust="spacingAndGlyphs">Trigger Mode</text>
<text x="1774.97" y="731.60" font-size="13.80" fill="#000" textLength="30.87" lengthAdjust="spacingAndGlyphs">Edge</text>
<text x="1659.90" y="771.60" font-size="13.80" fill="#000" textLength="82.82" lengthAdjust="spacingAndGlyphs">Trigger Sweep</text>
<text x="1775.60" y="771.60" font-size="13.80" fill="#000" textLength="47.45" lengthAdjust="spacingAndGlyphs">SINGLE</text>
<text x="1659.90" y="811.60" font-size="13.80" fill="#000" textLength="84.32" lengthAdjust="spacingAndGlyphs">Trigger Source</text>
<text x="1775.39" y="811.60" font-size="13.80" fill="#000" textLength="25.83" lengthAdjust="spacingAndGlyphs">CH1</text>
<text x="1659.90" y="851.60" font-size="13.80" fill="#000" textLength="76.22" lengthAdjust="spacingAndGlyphs">Trigger Slope</text>
<text x="1775.57" y="851.60" font-size="13.80" fill="#000" textLength="4.59" lengthAdjust="spacingAndGlyphs">-</text>
<text x="1729.89" y="1060.75" font-size="15.08" fill="#ffffff" textLength="30.66" lengthAdjust="spacingAndGlyphs">ENG</text>
<text x="1792.33" y="1048.75" font-size="15.08" fill="#ffffff" textLength="35.75" lengthAdjust="spacingAndGlyphs">20:19</text>
<text x="1775.34" y="1072.00" font-size="15.08" fill="#ffffff" textLength="70.51" lengthAdjust="spacingAndGlyphs">23.04.2020</text>
</svg>
</body></html>
